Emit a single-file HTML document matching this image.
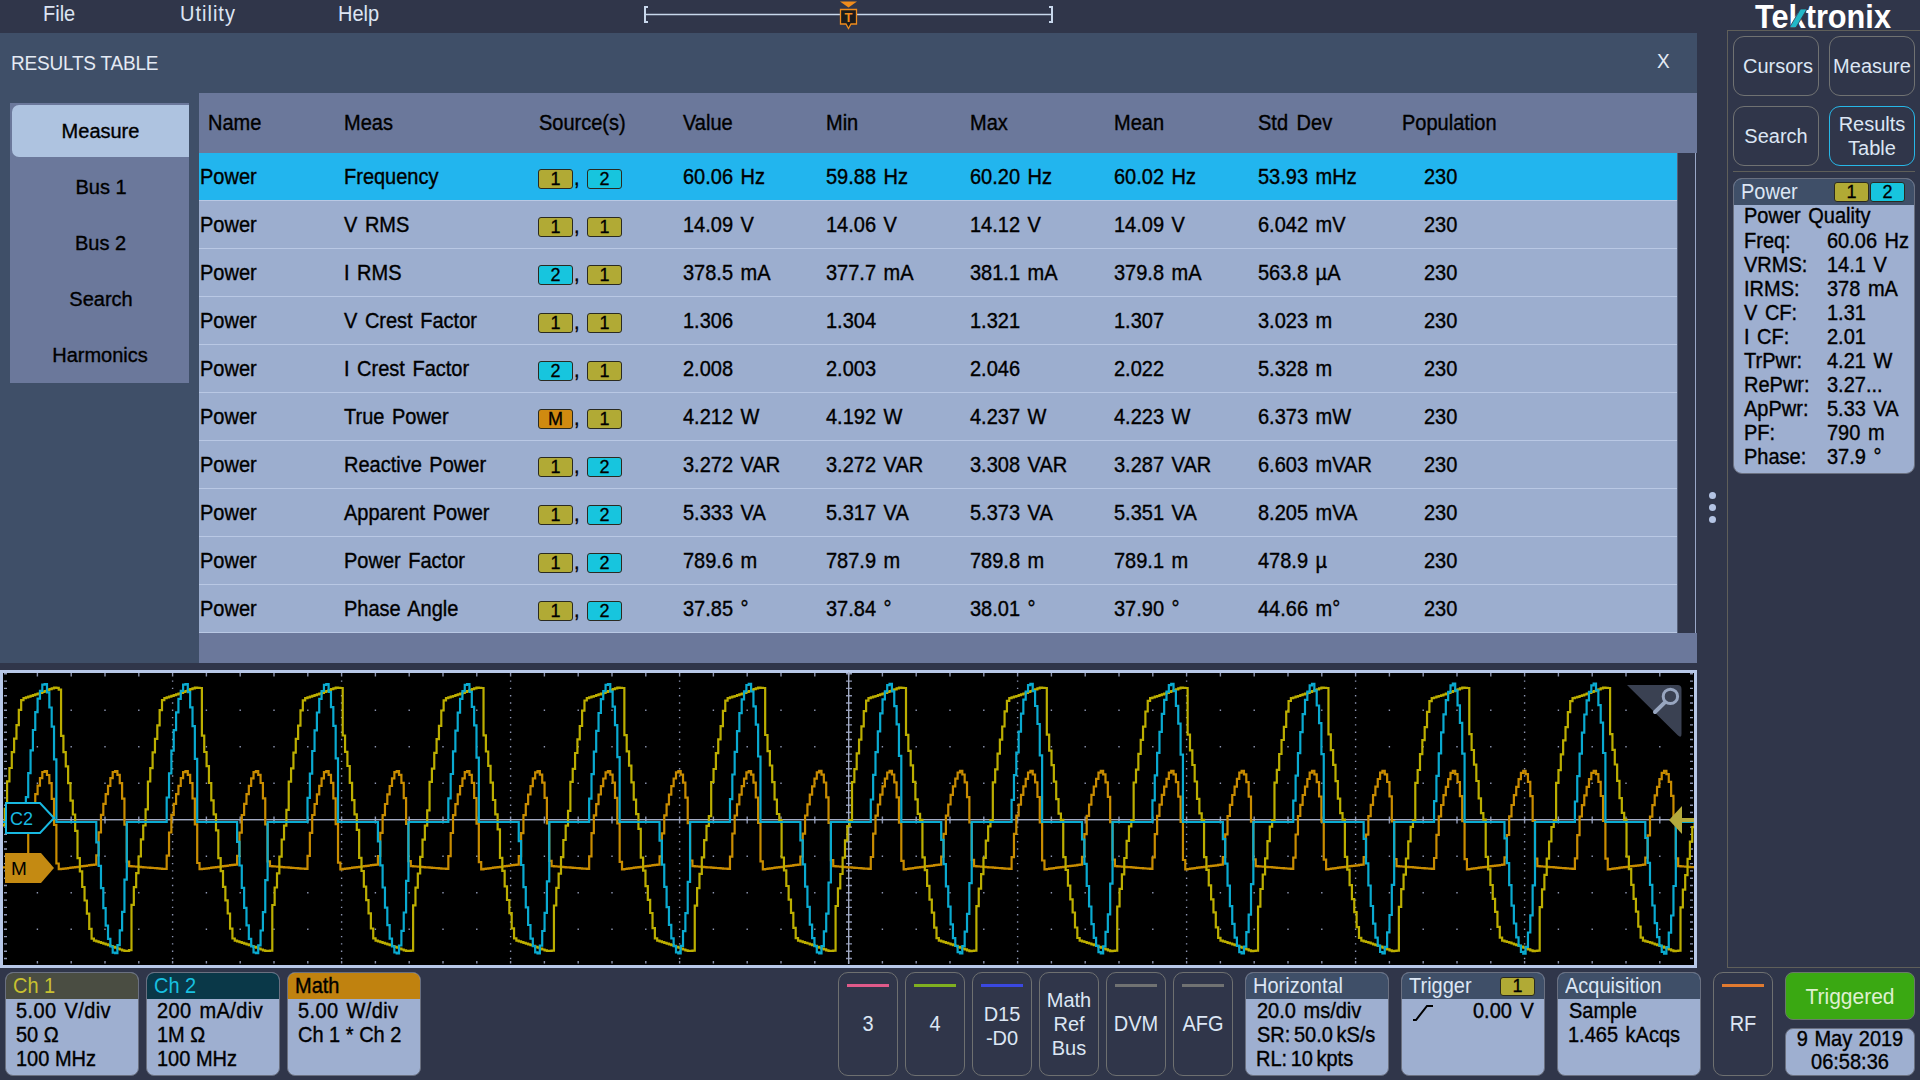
<!DOCTYPE html>
<html><head><meta charset="utf-8">
<style>
*{margin:0;padding:0;box-sizing:border-box}
html,body{width:1920px;height:1080px;overflow:hidden;background:#30364a;font-family:"Liberation Sans",sans-serif;color:#000}
.a{position:absolute}
.t{position:absolute;white-space:pre;line-height:1}
.k{-webkit-text-stroke:0.35px #000}
</style></head>
<body>
<div class="t" style="left:43.0px;top:4.4px;font-size:20px;color:#dce4f2;transform:scaleY(1.08);transform-origin:0 100%">File</div>
<div class="t" style="left:180.0px;top:4.4px;font-size:20px;color:#dce4f2;letter-spacing:1px;transform:scaleY(1.08);transform-origin:0 100%">Utility</div>
<div class="t" style="left:338.0px;top:4.4px;font-size:20px;color:#dce4f2;transform:scaleY(1.08);transform-origin:0 100%">Help</div>
<svg class="a" style="left:0;top:0" width="1100" height="32">
<line x1="645" y1="14.5" x2="1052" y2="14.5" stroke="#c8d8ec" stroke-width="1.5"/>
<path d="M648 7 H645 V22 H648" fill="none" stroke="#c8d8ec" stroke-width="2"/>
<path d="M1049 7 H1052 V22 H1049" fill="none" stroke="#c8d8ec" stroke-width="2"/>
<path d="M840 1.5 H857 L848.5 7.5 Z" fill="#f08c1c"/>
<path d="M840.5 9.5 H856.5 V24 H851 L848.5 28.5 L846 24 H840.5 Z" fill="#1c1c1c" stroke="#f08c1c" stroke-width="1.3"/>
<text x="848.5" y="22" font-family="Liberation Sans" font-weight="bold" font-size="13" fill="#f08c1c" text-anchor="middle">T</text>
</svg>
<div class="a" style="left:0px;top:33px;width:1697px;height:630px;background:#3f4f68;"></div>
<div class="t" style="left:11.0px;top:54.1px;font-size:19px;color:#e4eaf4;letter-spacing:-0.2px;transform:scaleY(1.08);transform-origin:0 100%">RESULTS TABLE</div>
<div class="t" style="left:1657.0px;top:52.4px;font-size:19px;color:#e4eaf4;;transform:scaleY(1.06);transform-origin:0 84.65%">X</div>
<div class="a" style="left:10px;top:103px;width:179px;height:280px;background:#6b789b;"></div>
<div class="a" style="left:12px;top:105px;width:177px;height:52px;background:#aec3e0;border-radius:7px 0 0 7px"></div>
<div class="t k" style="left:0.5px;width:200px;text-align:center;top:120.6px;font-size:20px;word-spacing:0px">Measure</div>
<div class="t k" style="left:1px;width:200px;text-align:center;top:176.6px;font-size:20px;word-spacing:0px">Bus 1</div>
<div class="t k" style="left:0.5px;width:200px;text-align:center;top:232.6px;font-size:20px;word-spacing:0px">Bus 2</div>
<div class="t k" style="left:1px;width:200px;text-align:center;top:288.6px;font-size:20px;word-spacing:0px">Search</div>
<div class="t k" style="left:0px;width:200px;text-align:center;top:344.6px;font-size:20px;word-spacing:0px">Harmonics</div>
<div class="a" style="left:199px;top:93px;width:1498px;height:60px;background:#6b789b;"></div>
<div class="a" style="left:199px;top:153px;width:1478px;height:480px;background:#9caecf;"></div>
<div class="a" style="left:199px;top:153px;width:1478px;height:47px;background:#22b5ee;"></div>
<div class="a" style="left:199px;top:200px;width:1478px;height:1px;background:#b9c8e4;"></div>
<div class="a" style="left:199px;top:248px;width:1478px;height:1px;background:#b9c8e4;"></div>
<div class="a" style="left:199px;top:296px;width:1478px;height:1px;background:#b9c8e4;"></div>
<div class="a" style="left:199px;top:344px;width:1478px;height:1px;background:#b9c8e4;"></div>
<div class="a" style="left:199px;top:392px;width:1478px;height:1px;background:#b9c8e4;"></div>
<div class="a" style="left:199px;top:440px;width:1478px;height:1px;background:#b9c8e4;"></div>
<div class="a" style="left:199px;top:488px;width:1478px;height:1px;background:#b9c8e4;"></div>
<div class="a" style="left:199px;top:536px;width:1478px;height:1px;background:#b9c8e4;"></div>
<div class="a" style="left:199px;top:584px;width:1478px;height:1px;background:#b9c8e4;"></div>
<div class="a" style="left:1677px;top:153px;width:20px;height:480px;background:#30364a;"></div>
<div class="a" style="left:1695px;top:153px;width:1px;height:480px;background:#9aa8c8;"></div>
<div class="a" style="left:1677px;top:153px;width:1px;height:480px;background:#566078;"></div>
<div class="a" style="left:199px;top:633px;width:1498px;height:30px;background:#6b789b;"></div>
<div class="a" style="left:199px;top:632px;width:1478px;height:1px;background:#b9c8e4;"></div>
<div class="t k" style="left:208.0px;top:113.1px;font-size:20px;color:#000;word-spacing:3px;transform:scaleY(1.06);transform-origin:0 84.65%">Name</div>
<div class="t k" style="left:344.0px;top:113.1px;font-size:20px;color:#000;word-spacing:3px;transform:scaleY(1.06);transform-origin:0 84.65%">Meas</div>
<div class="t k" style="left:539.0px;top:113.1px;font-size:20px;color:#000;word-spacing:3px;transform:scaleY(1.06);transform-origin:0 84.65%">Source(s)</div>
<div class="t k" style="left:683.0px;top:113.1px;font-size:20px;color:#000;word-spacing:3px;transform:scaleY(1.06);transform-origin:0 84.65%">Value</div>
<div class="t k" style="left:826.0px;top:113.1px;font-size:20px;color:#000;word-spacing:3px;transform:scaleY(1.06);transform-origin:0 84.65%">Min</div>
<div class="t k" style="left:970.0px;top:113.1px;font-size:20px;color:#000;word-spacing:3px;transform:scaleY(1.06);transform-origin:0 84.65%">Max</div>
<div class="t k" style="left:1114.0px;top:113.1px;font-size:20px;color:#000;word-spacing:3px;transform:scaleY(1.06);transform-origin:0 84.65%">Mean</div>
<div class="t k" style="left:1258.0px;top:113.1px;font-size:20px;color:#000;word-spacing:3px;transform:scaleY(1.06);transform-origin:0 84.65%">Std Dev</div>
<div class="t k" style="left:1402.0px;top:113.1px;font-size:20px;color:#000;word-spacing:3px;transform:scaleY(1.06);transform-origin:0 84.65%">Population</div>
<div class="t k" style="left:200.0px;top:166.6px;font-size:20px;color:#000;;transform:scaleY(1.06);transform-origin:0 84.65%">Power</div>
<div class="t k" style="left:344.0px;top:166.6px;font-size:20px;color:#000;word-spacing:2px;transform:scaleY(1.06);transform-origin:0 84.65%">Frequency</div>
<div class="a" style="left:538px;top:169px;width:35px;height:20px;background:#b1aa35;border:1px solid #2a2a20;border-radius:3px;font-size:18px;line-height:18px;text-align:center;color:#000;-webkit-text-stroke:0.3px #000">1</div>
<div class="t k" style="left:574.0px;top:167.6px;font-size:20px;color:#000;;transform:scaleY(1.06);transform-origin:0 84.65%">,</div>
<div class="a" style="left:587px;top:169px;width:35px;height:20px;background:#17c5de;border:1px solid #2a2a20;border-radius:3px;font-size:18px;line-height:18px;text-align:center;color:#000;-webkit-text-stroke:0.3px #000">2</div>
<div class="t k" style="left:683.0px;top:166.6px;font-size:20px;color:#000;word-spacing:2px;transform:scaleY(1.06);transform-origin:0 84.65%">60.06 Hz</div>
<div class="t k" style="left:826.0px;top:166.6px;font-size:20px;color:#000;word-spacing:2px;transform:scaleY(1.06);transform-origin:0 84.65%">59.88 Hz</div>
<div class="t k" style="left:970.0px;top:166.6px;font-size:20px;color:#000;word-spacing:2px;transform:scaleY(1.06);transform-origin:0 84.65%">60.20 Hz</div>
<div class="t k" style="left:1114.0px;top:166.6px;font-size:20px;color:#000;word-spacing:2px;transform:scaleY(1.06);transform-origin:0 84.65%">60.02 Hz</div>
<div class="t k" style="left:1258.0px;top:166.6px;font-size:20px;color:#000;word-spacing:2px;transform:scaleY(1.06);transform-origin:0 84.65%">53.93 mHz</div>
<div class="t k" style="left:1424.0px;top:166.6px;font-size:20px;color:#000;;transform:scaleY(1.06);transform-origin:0 84.65%">230</div>
<div class="t k" style="left:200.0px;top:214.6px;font-size:20px;color:#000;;transform:scaleY(1.06);transform-origin:0 84.65%">Power</div>
<div class="t k" style="left:344.0px;top:214.6px;font-size:20px;color:#000;word-spacing:2px;transform:scaleY(1.06);transform-origin:0 84.65%">V RMS</div>
<div class="a" style="left:538px;top:217px;width:35px;height:20px;background:#b1aa35;border:1px solid #2a2a20;border-radius:3px;font-size:18px;line-height:18px;text-align:center;color:#000;-webkit-text-stroke:0.3px #000">1</div>
<div class="t k" style="left:574.0px;top:215.6px;font-size:20px;color:#000;;transform:scaleY(1.06);transform-origin:0 84.65%">,</div>
<div class="a" style="left:587px;top:217px;width:35px;height:20px;background:#b1aa35;border:1px solid #2a2a20;border-radius:3px;font-size:18px;line-height:18px;text-align:center;color:#000;-webkit-text-stroke:0.3px #000">1</div>
<div class="t k" style="left:683.0px;top:214.6px;font-size:20px;color:#000;word-spacing:2px;transform:scaleY(1.06);transform-origin:0 84.65%">14.09 V</div>
<div class="t k" style="left:826.0px;top:214.6px;font-size:20px;color:#000;word-spacing:2px;transform:scaleY(1.06);transform-origin:0 84.65%">14.06 V</div>
<div class="t k" style="left:970.0px;top:214.6px;font-size:20px;color:#000;word-spacing:2px;transform:scaleY(1.06);transform-origin:0 84.65%">14.12 V</div>
<div class="t k" style="left:1114.0px;top:214.6px;font-size:20px;color:#000;word-spacing:2px;transform:scaleY(1.06);transform-origin:0 84.65%">14.09 V</div>
<div class="t k" style="left:1258.0px;top:214.6px;font-size:20px;color:#000;word-spacing:2px;transform:scaleY(1.06);transform-origin:0 84.65%">6.042 mV</div>
<div class="t k" style="left:1424.0px;top:214.6px;font-size:20px;color:#000;;transform:scaleY(1.06);transform-origin:0 84.65%">230</div>
<div class="t k" style="left:200.0px;top:262.6px;font-size:20px;color:#000;;transform:scaleY(1.06);transform-origin:0 84.65%">Power</div>
<div class="t k" style="left:344.0px;top:262.6px;font-size:20px;color:#000;word-spacing:2px;transform:scaleY(1.06);transform-origin:0 84.65%">I RMS</div>
<div class="a" style="left:538px;top:265px;width:35px;height:20px;background:#17c5de;border:1px solid #2a2a20;border-radius:3px;font-size:18px;line-height:18px;text-align:center;color:#000;-webkit-text-stroke:0.3px #000">2</div>
<div class="t k" style="left:574.0px;top:263.6px;font-size:20px;color:#000;;transform:scaleY(1.06);transform-origin:0 84.65%">,</div>
<div class="a" style="left:587px;top:265px;width:35px;height:20px;background:#b1aa35;border:1px solid #2a2a20;border-radius:3px;font-size:18px;line-height:18px;text-align:center;color:#000;-webkit-text-stroke:0.3px #000">1</div>
<div class="t k" style="left:683.0px;top:262.6px;font-size:20px;color:#000;word-spacing:2px;transform:scaleY(1.06);transform-origin:0 84.65%">378.5 mA</div>
<div class="t k" style="left:826.0px;top:262.6px;font-size:20px;color:#000;word-spacing:2px;transform:scaleY(1.06);transform-origin:0 84.65%">377.7 mA</div>
<div class="t k" style="left:970.0px;top:262.6px;font-size:20px;color:#000;word-spacing:2px;transform:scaleY(1.06);transform-origin:0 84.65%">381.1 mA</div>
<div class="t k" style="left:1114.0px;top:262.6px;font-size:20px;color:#000;word-spacing:2px;transform:scaleY(1.06);transform-origin:0 84.65%">379.8 mA</div>
<div class="t k" style="left:1258.0px;top:262.6px;font-size:20px;color:#000;word-spacing:2px;transform:scaleY(1.06);transform-origin:0 84.65%">563.8 µA</div>
<div class="t k" style="left:1424.0px;top:262.6px;font-size:20px;color:#000;;transform:scaleY(1.06);transform-origin:0 84.65%">230</div>
<div class="t k" style="left:200.0px;top:310.6px;font-size:20px;color:#000;;transform:scaleY(1.06);transform-origin:0 84.65%">Power</div>
<div class="t k" style="left:344.0px;top:310.6px;font-size:20px;color:#000;word-spacing:2px;transform:scaleY(1.06);transform-origin:0 84.65%">V Crest Factor</div>
<div class="a" style="left:538px;top:313px;width:35px;height:20px;background:#b1aa35;border:1px solid #2a2a20;border-radius:3px;font-size:18px;line-height:18px;text-align:center;color:#000;-webkit-text-stroke:0.3px #000">1</div>
<div class="t k" style="left:574.0px;top:311.6px;font-size:20px;color:#000;;transform:scaleY(1.06);transform-origin:0 84.65%">,</div>
<div class="a" style="left:587px;top:313px;width:35px;height:20px;background:#b1aa35;border:1px solid #2a2a20;border-radius:3px;font-size:18px;line-height:18px;text-align:center;color:#000;-webkit-text-stroke:0.3px #000">1</div>
<div class="t k" style="left:683.0px;top:310.6px;font-size:20px;color:#000;word-spacing:2px;transform:scaleY(1.06);transform-origin:0 84.65%">1.306</div>
<div class="t k" style="left:826.0px;top:310.6px;font-size:20px;color:#000;word-spacing:2px;transform:scaleY(1.06);transform-origin:0 84.65%">1.304</div>
<div class="t k" style="left:970.0px;top:310.6px;font-size:20px;color:#000;word-spacing:2px;transform:scaleY(1.06);transform-origin:0 84.65%">1.321</div>
<div class="t k" style="left:1114.0px;top:310.6px;font-size:20px;color:#000;word-spacing:2px;transform:scaleY(1.06);transform-origin:0 84.65%">1.307</div>
<div class="t k" style="left:1258.0px;top:310.6px;font-size:20px;color:#000;word-spacing:2px;transform:scaleY(1.06);transform-origin:0 84.65%">3.023 m</div>
<div class="t k" style="left:1424.0px;top:310.6px;font-size:20px;color:#000;;transform:scaleY(1.06);transform-origin:0 84.65%">230</div>
<div class="t k" style="left:200.0px;top:358.6px;font-size:20px;color:#000;;transform:scaleY(1.06);transform-origin:0 84.65%">Power</div>
<div class="t k" style="left:344.0px;top:358.6px;font-size:20px;color:#000;word-spacing:2px;transform:scaleY(1.06);transform-origin:0 84.65%">I Crest Factor</div>
<div class="a" style="left:538px;top:361px;width:35px;height:20px;background:#17c5de;border:1px solid #2a2a20;border-radius:3px;font-size:18px;line-height:18px;text-align:center;color:#000;-webkit-text-stroke:0.3px #000">2</div>
<div class="t k" style="left:574.0px;top:359.6px;font-size:20px;color:#000;;transform:scaleY(1.06);transform-origin:0 84.65%">,</div>
<div class="a" style="left:587px;top:361px;width:35px;height:20px;background:#b1aa35;border:1px solid #2a2a20;border-radius:3px;font-size:18px;line-height:18px;text-align:center;color:#000;-webkit-text-stroke:0.3px #000">1</div>
<div class="t k" style="left:683.0px;top:358.6px;font-size:20px;color:#000;word-spacing:2px;transform:scaleY(1.06);transform-origin:0 84.65%">2.008</div>
<div class="t k" style="left:826.0px;top:358.6px;font-size:20px;color:#000;word-spacing:2px;transform:scaleY(1.06);transform-origin:0 84.65%">2.003</div>
<div class="t k" style="left:970.0px;top:358.6px;font-size:20px;color:#000;word-spacing:2px;transform:scaleY(1.06);transform-origin:0 84.65%">2.046</div>
<div class="t k" style="left:1114.0px;top:358.6px;font-size:20px;color:#000;word-spacing:2px;transform:scaleY(1.06);transform-origin:0 84.65%">2.022</div>
<div class="t k" style="left:1258.0px;top:358.6px;font-size:20px;color:#000;word-spacing:2px;transform:scaleY(1.06);transform-origin:0 84.65%">5.328 m</div>
<div class="t k" style="left:1424.0px;top:358.6px;font-size:20px;color:#000;;transform:scaleY(1.06);transform-origin:0 84.65%">230</div>
<div class="t k" style="left:200.0px;top:406.6px;font-size:20px;color:#000;;transform:scaleY(1.06);transform-origin:0 84.65%">Power</div>
<div class="t k" style="left:344.0px;top:406.6px;font-size:20px;color:#000;word-spacing:2px;transform:scaleY(1.06);transform-origin:0 84.65%">True Power</div>
<div class="a" style="left:538px;top:409px;width:35px;height:20px;background:#d08a10;border:1px solid #2a2a20;border-radius:3px;font-size:18px;line-height:18px;text-align:center;color:#000;-webkit-text-stroke:0.3px #000">M</div>
<div class="t k" style="left:574.0px;top:407.6px;font-size:20px;color:#000;;transform:scaleY(1.06);transform-origin:0 84.65%">,</div>
<div class="a" style="left:587px;top:409px;width:35px;height:20px;background:#b1aa35;border:1px solid #2a2a20;border-radius:3px;font-size:18px;line-height:18px;text-align:center;color:#000;-webkit-text-stroke:0.3px #000">1</div>
<div class="t k" style="left:683.0px;top:406.6px;font-size:20px;color:#000;word-spacing:2px;transform:scaleY(1.06);transform-origin:0 84.65%">4.212 W</div>
<div class="t k" style="left:826.0px;top:406.6px;font-size:20px;color:#000;word-spacing:2px;transform:scaleY(1.06);transform-origin:0 84.65%">4.192 W</div>
<div class="t k" style="left:970.0px;top:406.6px;font-size:20px;color:#000;word-spacing:2px;transform:scaleY(1.06);transform-origin:0 84.65%">4.237 W</div>
<div class="t k" style="left:1114.0px;top:406.6px;font-size:20px;color:#000;word-spacing:2px;transform:scaleY(1.06);transform-origin:0 84.65%">4.223 W</div>
<div class="t k" style="left:1258.0px;top:406.6px;font-size:20px;color:#000;word-spacing:2px;transform:scaleY(1.06);transform-origin:0 84.65%">6.373 mW</div>
<div class="t k" style="left:1424.0px;top:406.6px;font-size:20px;color:#000;;transform:scaleY(1.06);transform-origin:0 84.65%">230</div>
<div class="t k" style="left:200.0px;top:454.6px;font-size:20px;color:#000;;transform:scaleY(1.06);transform-origin:0 84.65%">Power</div>
<div class="t k" style="left:344.0px;top:454.6px;font-size:20px;color:#000;word-spacing:2px;transform:scaleY(1.06);transform-origin:0 84.65%">Reactive Power</div>
<div class="a" style="left:538px;top:457px;width:35px;height:20px;background:#b1aa35;border:1px solid #2a2a20;border-radius:3px;font-size:18px;line-height:18px;text-align:center;color:#000;-webkit-text-stroke:0.3px #000">1</div>
<div class="t k" style="left:574.0px;top:455.6px;font-size:20px;color:#000;;transform:scaleY(1.06);transform-origin:0 84.65%">,</div>
<div class="a" style="left:587px;top:457px;width:35px;height:20px;background:#17c5de;border:1px solid #2a2a20;border-radius:3px;font-size:18px;line-height:18px;text-align:center;color:#000;-webkit-text-stroke:0.3px #000">2</div>
<div class="t k" style="left:683.0px;top:454.6px;font-size:20px;color:#000;word-spacing:2px;transform:scaleY(1.06);transform-origin:0 84.65%">3.272 VAR</div>
<div class="t k" style="left:826.0px;top:454.6px;font-size:20px;color:#000;word-spacing:2px;transform:scaleY(1.06);transform-origin:0 84.65%">3.272 VAR</div>
<div class="t k" style="left:970.0px;top:454.6px;font-size:20px;color:#000;word-spacing:2px;transform:scaleY(1.06);transform-origin:0 84.65%">3.308 VAR</div>
<div class="t k" style="left:1114.0px;top:454.6px;font-size:20px;color:#000;word-spacing:2px;transform:scaleY(1.06);transform-origin:0 84.65%">3.287 VAR</div>
<div class="t k" style="left:1258.0px;top:454.6px;font-size:20px;color:#000;word-spacing:2px;transform:scaleY(1.06);transform-origin:0 84.65%">6.603 mVAR</div>
<div class="t k" style="left:1424.0px;top:454.6px;font-size:20px;color:#000;;transform:scaleY(1.06);transform-origin:0 84.65%">230</div>
<div class="t k" style="left:200.0px;top:502.6px;font-size:20px;color:#000;;transform:scaleY(1.06);transform-origin:0 84.65%">Power</div>
<div class="t k" style="left:344.0px;top:502.6px;font-size:20px;color:#000;word-spacing:2px;transform:scaleY(1.06);transform-origin:0 84.65%">Apparent Power</div>
<div class="a" style="left:538px;top:505px;width:35px;height:20px;background:#b1aa35;border:1px solid #2a2a20;border-radius:3px;font-size:18px;line-height:18px;text-align:center;color:#000;-webkit-text-stroke:0.3px #000">1</div>
<div class="t k" style="left:574.0px;top:503.6px;font-size:20px;color:#000;;transform:scaleY(1.06);transform-origin:0 84.65%">,</div>
<div class="a" style="left:587px;top:505px;width:35px;height:20px;background:#17c5de;border:1px solid #2a2a20;border-radius:3px;font-size:18px;line-height:18px;text-align:center;color:#000;-webkit-text-stroke:0.3px #000">2</div>
<div class="t k" style="left:683.0px;top:502.6px;font-size:20px;color:#000;word-spacing:2px;transform:scaleY(1.06);transform-origin:0 84.65%">5.333 VA</div>
<div class="t k" style="left:826.0px;top:502.6px;font-size:20px;color:#000;word-spacing:2px;transform:scaleY(1.06);transform-origin:0 84.65%">5.317 VA</div>
<div class="t k" style="left:970.0px;top:502.6px;font-size:20px;color:#000;word-spacing:2px;transform:scaleY(1.06);transform-origin:0 84.65%">5.373 VA</div>
<div class="t k" style="left:1114.0px;top:502.6px;font-size:20px;color:#000;word-spacing:2px;transform:scaleY(1.06);transform-origin:0 84.65%">5.351 VA</div>
<div class="t k" style="left:1258.0px;top:502.6px;font-size:20px;color:#000;word-spacing:2px;transform:scaleY(1.06);transform-origin:0 84.65%">8.205 mVA</div>
<div class="t k" style="left:1424.0px;top:502.6px;font-size:20px;color:#000;;transform:scaleY(1.06);transform-origin:0 84.65%">230</div>
<div class="t k" style="left:200.0px;top:550.6px;font-size:20px;color:#000;;transform:scaleY(1.06);transform-origin:0 84.65%">Power</div>
<div class="t k" style="left:344.0px;top:550.6px;font-size:20px;color:#000;word-spacing:2px;transform:scaleY(1.06);transform-origin:0 84.65%">Power Factor</div>
<div class="a" style="left:538px;top:553px;width:35px;height:20px;background:#b1aa35;border:1px solid #2a2a20;border-radius:3px;font-size:18px;line-height:18px;text-align:center;color:#000;-webkit-text-stroke:0.3px #000">1</div>
<div class="t k" style="left:574.0px;top:551.6px;font-size:20px;color:#000;;transform:scaleY(1.06);transform-origin:0 84.65%">,</div>
<div class="a" style="left:587px;top:553px;width:35px;height:20px;background:#17c5de;border:1px solid #2a2a20;border-radius:3px;font-size:18px;line-height:18px;text-align:center;color:#000;-webkit-text-stroke:0.3px #000">2</div>
<div class="t k" style="left:683.0px;top:550.6px;font-size:20px;color:#000;word-spacing:2px;transform:scaleY(1.06);transform-origin:0 84.65%">789.6 m</div>
<div class="t k" style="left:826.0px;top:550.6px;font-size:20px;color:#000;word-spacing:2px;transform:scaleY(1.06);transform-origin:0 84.65%">787.9 m</div>
<div class="t k" style="left:970.0px;top:550.6px;font-size:20px;color:#000;word-spacing:2px;transform:scaleY(1.06);transform-origin:0 84.65%">789.8 m</div>
<div class="t k" style="left:1114.0px;top:550.6px;font-size:20px;color:#000;word-spacing:2px;transform:scaleY(1.06);transform-origin:0 84.65%">789.1 m</div>
<div class="t k" style="left:1258.0px;top:550.6px;font-size:20px;color:#000;word-spacing:2px;transform:scaleY(1.06);transform-origin:0 84.65%">478.9 µ</div>
<div class="t k" style="left:1424.0px;top:550.6px;font-size:20px;color:#000;;transform:scaleY(1.06);transform-origin:0 84.65%">230</div>
<div class="t k" style="left:200.0px;top:598.6px;font-size:20px;color:#000;;transform:scaleY(1.06);transform-origin:0 84.65%">Power</div>
<div class="t k" style="left:344.0px;top:598.6px;font-size:20px;color:#000;word-spacing:2px;transform:scaleY(1.06);transform-origin:0 84.65%">Phase Angle</div>
<div class="a" style="left:538px;top:601px;width:35px;height:20px;background:#b1aa35;border:1px solid #2a2a20;border-radius:3px;font-size:18px;line-height:18px;text-align:center;color:#000;-webkit-text-stroke:0.3px #000">1</div>
<div class="t k" style="left:574.0px;top:599.6px;font-size:20px;color:#000;;transform:scaleY(1.06);transform-origin:0 84.65%">,</div>
<div class="a" style="left:587px;top:601px;width:35px;height:20px;background:#17c5de;border:1px solid #2a2a20;border-radius:3px;font-size:18px;line-height:18px;text-align:center;color:#000;-webkit-text-stroke:0.3px #000">2</div>
<div class="t k" style="left:683.0px;top:598.6px;font-size:20px;color:#000;word-spacing:2px;transform:scaleY(1.06);transform-origin:0 84.65%">37.85 °</div>
<div class="t k" style="left:826.0px;top:598.6px;font-size:20px;color:#000;word-spacing:2px;transform:scaleY(1.06);transform-origin:0 84.65%">37.84 °</div>
<div class="t k" style="left:970.0px;top:598.6px;font-size:20px;color:#000;word-spacing:2px;transform:scaleY(1.06);transform-origin:0 84.65%">38.01 °</div>
<div class="t k" style="left:1114.0px;top:598.6px;font-size:20px;color:#000;word-spacing:2px;transform:scaleY(1.06);transform-origin:0 84.65%">37.90 °</div>
<div class="t k" style="left:1258.0px;top:598.6px;font-size:20px;color:#000;word-spacing:2px;transform:scaleY(1.06);transform-origin:0 84.65%">44.66 m°</div>
<div class="t k" style="left:1424.0px;top:598.6px;font-size:20px;color:#000;;transform:scaleY(1.06);transform-origin:0 84.65%">230</div>
<div class="a" style="left:0px;top:670px;width:1697px;height:298px;background:#b8c8e8;"></div>
<div class="a" style="left:3px;top:673px;width:1691px;height:292px;background:#000;"></div>
<svg class="a" style="left:3px;top:672px" width="1691" height="292" viewBox="3 672 1691 292">
<path d="M36.7 673.1h1.4v1.4h-1.4z M70.5 673.1h1.4v1.4h-1.4z M104.3 673.1h1.4v1.4h-1.4z M138.1 673.1h1.4v1.4h-1.4z M171.9 673.1h1.4v1.4h-1.4z M205.7 673.1h1.4v1.4h-1.4z M239.5 673.1h1.4v1.4h-1.4z M273.3 673.1h1.4v1.4h-1.4z M307.1 673.1h1.4v1.4h-1.4z M340.9 673.1h1.4v1.4h-1.4z M374.7 673.1h1.4v1.4h-1.4z M408.5 673.1h1.4v1.4h-1.4z M442.3 673.1h1.4v1.4h-1.4z M476.1 673.1h1.4v1.4h-1.4z M509.9 673.1h1.4v1.4h-1.4z M543.7 673.1h1.4v1.4h-1.4z M577.5 673.1h1.4v1.4h-1.4z M611.3 673.1h1.4v1.4h-1.4z M645.1 673.1h1.4v1.4h-1.4z M678.9 673.1h1.4v1.4h-1.4z M712.7 673.1h1.4v1.4h-1.4z M746.5 673.1h1.4v1.4h-1.4z M780.3 673.1h1.4v1.4h-1.4z M814.1 673.1h1.4v1.4h-1.4z M847.9 673.1h1.4v1.4h-1.4z M881.7 673.1h1.4v1.4h-1.4z M915.5 673.1h1.4v1.4h-1.4z M949.3 673.1h1.4v1.4h-1.4z M983.1 673.1h1.4v1.4h-1.4z M1016.9 673.1h1.4v1.4h-1.4z M1050.7 673.1h1.4v1.4h-1.4z M1084.5 673.1h1.4v1.4h-1.4z M1118.3 673.1h1.4v1.4h-1.4z M1152.1 673.1h1.4v1.4h-1.4z M1185.9 673.1h1.4v1.4h-1.4z M1219.7 673.1h1.4v1.4h-1.4z M1253.5 673.1h1.4v1.4h-1.4z M1287.3 673.1h1.4v1.4h-1.4z M1321.1 673.1h1.4v1.4h-1.4z M1354.9 673.1h1.4v1.4h-1.4z M1388.7 673.1h1.4v1.4h-1.4z M1422.5 673.1h1.4v1.4h-1.4z M1456.3 673.1h1.4v1.4h-1.4z M1490.1 673.1h1.4v1.4h-1.4z M1523.9 673.1h1.4v1.4h-1.4z M1557.7 673.1h1.4v1.4h-1.4z M1591.5 673.1h1.4v1.4h-1.4z M1625.3 673.1h1.4v1.4h-1.4z M1659.1 673.1h1.4v1.4h-1.4z M36.7 709.6h1.4v1.4h-1.4z M70.5 709.6h1.4v1.4h-1.4z M104.3 709.6h1.4v1.4h-1.4z M138.1 709.6h1.4v1.4h-1.4z M171.9 709.6h1.4v1.4h-1.4z M205.7 709.6h1.4v1.4h-1.4z M239.5 709.6h1.4v1.4h-1.4z M273.3 709.6h1.4v1.4h-1.4z M307.1 709.6h1.4v1.4h-1.4z M340.9 709.6h1.4v1.4h-1.4z M374.7 709.6h1.4v1.4h-1.4z M408.5 709.6h1.4v1.4h-1.4z M442.3 709.6h1.4v1.4h-1.4z M476.1 709.6h1.4v1.4h-1.4z M509.9 709.6h1.4v1.4h-1.4z M543.7 709.6h1.4v1.4h-1.4z M577.5 709.6h1.4v1.4h-1.4z M611.3 709.6h1.4v1.4h-1.4z M645.1 709.6h1.4v1.4h-1.4z M678.9 709.6h1.4v1.4h-1.4z M712.7 709.6h1.4v1.4h-1.4z M746.5 709.6h1.4v1.4h-1.4z M780.3 709.6h1.4v1.4h-1.4z M814.1 709.6h1.4v1.4h-1.4z M847.9 709.6h1.4v1.4h-1.4z M881.7 709.6h1.4v1.4h-1.4z M915.5 709.6h1.4v1.4h-1.4z M949.3 709.6h1.4v1.4h-1.4z M983.1 709.6h1.4v1.4h-1.4z M1016.9 709.6h1.4v1.4h-1.4z M1050.7 709.6h1.4v1.4h-1.4z M1084.5 709.6h1.4v1.4h-1.4z M1118.3 709.6h1.4v1.4h-1.4z M1152.1 709.6h1.4v1.4h-1.4z M1185.9 709.6h1.4v1.4h-1.4z M1219.7 709.6h1.4v1.4h-1.4z M1253.5 709.6h1.4v1.4h-1.4z M1287.3 709.6h1.4v1.4h-1.4z M1321.1 709.6h1.4v1.4h-1.4z M1354.9 709.6h1.4v1.4h-1.4z M1388.7 709.6h1.4v1.4h-1.4z M1422.5 709.6h1.4v1.4h-1.4z M1456.3 709.6h1.4v1.4h-1.4z M1490.1 709.6h1.4v1.4h-1.4z M1523.9 709.6h1.4v1.4h-1.4z M1557.7 709.6h1.4v1.4h-1.4z M1591.5 709.6h1.4v1.4h-1.4z M1625.3 709.6h1.4v1.4h-1.4z M1659.1 709.6h1.4v1.4h-1.4z M36.7 746.1h1.4v1.4h-1.4z M70.5 746.1h1.4v1.4h-1.4z M104.3 746.1h1.4v1.4h-1.4z M138.1 746.1h1.4v1.4h-1.4z M171.9 746.1h1.4v1.4h-1.4z M205.7 746.1h1.4v1.4h-1.4z M239.5 746.1h1.4v1.4h-1.4z M273.3 746.1h1.4v1.4h-1.4z M307.1 746.1h1.4v1.4h-1.4z M340.9 746.1h1.4v1.4h-1.4z M374.7 746.1h1.4v1.4h-1.4z M408.5 746.1h1.4v1.4h-1.4z M442.3 746.1h1.4v1.4h-1.4z M476.1 746.1h1.4v1.4h-1.4z M509.9 746.1h1.4v1.4h-1.4z M543.7 746.1h1.4v1.4h-1.4z M577.5 746.1h1.4v1.4h-1.4z M611.3 746.1h1.4v1.4h-1.4z M645.1 746.1h1.4v1.4h-1.4z M678.9 746.1h1.4v1.4h-1.4z M712.7 746.1h1.4v1.4h-1.4z M746.5 746.1h1.4v1.4h-1.4z M780.3 746.1h1.4v1.4h-1.4z M814.1 746.1h1.4v1.4h-1.4z M847.9 746.1h1.4v1.4h-1.4z M881.7 746.1h1.4v1.4h-1.4z M915.5 746.1h1.4v1.4h-1.4z M949.3 746.1h1.4v1.4h-1.4z M983.1 746.1h1.4v1.4h-1.4z M1016.9 746.1h1.4v1.4h-1.4z M1050.7 746.1h1.4v1.4h-1.4z M1084.5 746.1h1.4v1.4h-1.4z M1118.3 746.1h1.4v1.4h-1.4z M1152.1 746.1h1.4v1.4h-1.4z M1185.9 746.1h1.4v1.4h-1.4z M1219.7 746.1h1.4v1.4h-1.4z M1253.5 746.1h1.4v1.4h-1.4z M1287.3 746.1h1.4v1.4h-1.4z M1321.1 746.1h1.4v1.4h-1.4z M1354.9 746.1h1.4v1.4h-1.4z M1388.7 746.1h1.4v1.4h-1.4z M1422.5 746.1h1.4v1.4h-1.4z M1456.3 746.1h1.4v1.4h-1.4z M1490.1 746.1h1.4v1.4h-1.4z M1523.9 746.1h1.4v1.4h-1.4z M1557.7 746.1h1.4v1.4h-1.4z M1591.5 746.1h1.4v1.4h-1.4z M1625.3 746.1h1.4v1.4h-1.4z M1659.1 746.1h1.4v1.4h-1.4z M36.7 782.6h1.4v1.4h-1.4z M70.5 782.6h1.4v1.4h-1.4z M104.3 782.6h1.4v1.4h-1.4z M138.1 782.6h1.4v1.4h-1.4z M171.9 782.6h1.4v1.4h-1.4z M205.7 782.6h1.4v1.4h-1.4z M239.5 782.6h1.4v1.4h-1.4z M273.3 782.6h1.4v1.4h-1.4z M307.1 782.6h1.4v1.4h-1.4z M340.9 782.6h1.4v1.4h-1.4z M374.7 782.6h1.4v1.4h-1.4z M408.5 782.6h1.4v1.4h-1.4z M442.3 782.6h1.4v1.4h-1.4z M476.1 782.6h1.4v1.4h-1.4z M509.9 782.6h1.4v1.4h-1.4z M543.7 782.6h1.4v1.4h-1.4z M577.5 782.6h1.4v1.4h-1.4z M611.3 782.6h1.4v1.4h-1.4z M645.1 782.6h1.4v1.4h-1.4z M678.9 782.6h1.4v1.4h-1.4z M712.7 782.6h1.4v1.4h-1.4z M746.5 782.6h1.4v1.4h-1.4z M780.3 782.6h1.4v1.4h-1.4z M814.1 782.6h1.4v1.4h-1.4z M847.9 782.6h1.4v1.4h-1.4z M881.7 782.6h1.4v1.4h-1.4z M915.5 782.6h1.4v1.4h-1.4z M949.3 782.6h1.4v1.4h-1.4z M983.1 782.6h1.4v1.4h-1.4z M1016.9 782.6h1.4v1.4h-1.4z M1050.7 782.6h1.4v1.4h-1.4z M1084.5 782.6h1.4v1.4h-1.4z M1118.3 782.6h1.4v1.4h-1.4z M1152.1 782.6h1.4v1.4h-1.4z M1185.9 782.6h1.4v1.4h-1.4z M1219.7 782.6h1.4v1.4h-1.4z M1253.5 782.6h1.4v1.4h-1.4z M1287.3 782.6h1.4v1.4h-1.4z M1321.1 782.6h1.4v1.4h-1.4z M1354.9 782.6h1.4v1.4h-1.4z M1388.7 782.6h1.4v1.4h-1.4z M1422.5 782.6h1.4v1.4h-1.4z M1456.3 782.6h1.4v1.4h-1.4z M1490.1 782.6h1.4v1.4h-1.4z M1523.9 782.6h1.4v1.4h-1.4z M1557.7 782.6h1.4v1.4h-1.4z M1591.5 782.6h1.4v1.4h-1.4z M1625.3 782.6h1.4v1.4h-1.4z M1659.1 782.6h1.4v1.4h-1.4z M36.7 819.1h1.4v1.4h-1.4z M70.5 819.1h1.4v1.4h-1.4z M104.3 819.1h1.4v1.4h-1.4z M138.1 819.1h1.4v1.4h-1.4z M171.9 819.1h1.4v1.4h-1.4z M205.7 819.1h1.4v1.4h-1.4z M239.5 819.1h1.4v1.4h-1.4z M273.3 819.1h1.4v1.4h-1.4z M307.1 819.1h1.4v1.4h-1.4z M340.9 819.1h1.4v1.4h-1.4z M374.7 819.1h1.4v1.4h-1.4z M408.5 819.1h1.4v1.4h-1.4z M442.3 819.1h1.4v1.4h-1.4z M476.1 819.1h1.4v1.4h-1.4z M509.9 819.1h1.4v1.4h-1.4z M543.7 819.1h1.4v1.4h-1.4z M577.5 819.1h1.4v1.4h-1.4z M611.3 819.1h1.4v1.4h-1.4z M645.1 819.1h1.4v1.4h-1.4z M678.9 819.1h1.4v1.4h-1.4z M712.7 819.1h1.4v1.4h-1.4z M746.5 819.1h1.4v1.4h-1.4z M780.3 819.1h1.4v1.4h-1.4z M814.1 819.1h1.4v1.4h-1.4z M847.9 819.1h1.4v1.4h-1.4z M881.7 819.1h1.4v1.4h-1.4z M915.5 819.1h1.4v1.4h-1.4z M949.3 819.1h1.4v1.4h-1.4z M983.1 819.1h1.4v1.4h-1.4z M1016.9 819.1h1.4v1.4h-1.4z M1050.7 819.1h1.4v1.4h-1.4z M1084.5 819.1h1.4v1.4h-1.4z M1118.3 819.1h1.4v1.4h-1.4z M1152.1 819.1h1.4v1.4h-1.4z M1185.9 819.1h1.4v1.4h-1.4z M1219.7 819.1h1.4v1.4h-1.4z M1253.5 819.1h1.4v1.4h-1.4z M1287.3 819.1h1.4v1.4h-1.4z M1321.1 819.1h1.4v1.4h-1.4z M1354.9 819.1h1.4v1.4h-1.4z M1388.7 819.1h1.4v1.4h-1.4z M1422.5 819.1h1.4v1.4h-1.4z M1456.3 819.1h1.4v1.4h-1.4z M1490.1 819.1h1.4v1.4h-1.4z M1523.9 819.1h1.4v1.4h-1.4z M1557.7 819.1h1.4v1.4h-1.4z M1591.5 819.1h1.4v1.4h-1.4z M1625.3 819.1h1.4v1.4h-1.4z M1659.1 819.1h1.4v1.4h-1.4z M36.7 855.6h1.4v1.4h-1.4z M70.5 855.6h1.4v1.4h-1.4z M104.3 855.6h1.4v1.4h-1.4z M138.1 855.6h1.4v1.4h-1.4z M171.9 855.6h1.4v1.4h-1.4z M205.7 855.6h1.4v1.4h-1.4z M239.5 855.6h1.4v1.4h-1.4z M273.3 855.6h1.4v1.4h-1.4z M307.1 855.6h1.4v1.4h-1.4z M340.9 855.6h1.4v1.4h-1.4z M374.7 855.6h1.4v1.4h-1.4z M408.5 855.6h1.4v1.4h-1.4z M442.3 855.6h1.4v1.4h-1.4z M476.1 855.6h1.4v1.4h-1.4z M509.9 855.6h1.4v1.4h-1.4z M543.7 855.6h1.4v1.4h-1.4z M577.5 855.6h1.4v1.4h-1.4z M611.3 855.6h1.4v1.4h-1.4z M645.1 855.6h1.4v1.4h-1.4z M678.9 855.6h1.4v1.4h-1.4z M712.7 855.6h1.4v1.4h-1.4z M746.5 855.6h1.4v1.4h-1.4z M780.3 855.6h1.4v1.4h-1.4z M814.1 855.6h1.4v1.4h-1.4z M847.9 855.6h1.4v1.4h-1.4z M881.7 855.6h1.4v1.4h-1.4z M915.5 855.6h1.4v1.4h-1.4z M949.3 855.6h1.4v1.4h-1.4z M983.1 855.6h1.4v1.4h-1.4z M1016.9 855.6h1.4v1.4h-1.4z M1050.7 855.6h1.4v1.4h-1.4z M1084.5 855.6h1.4v1.4h-1.4z M1118.3 855.6h1.4v1.4h-1.4z M1152.1 855.6h1.4v1.4h-1.4z M1185.9 855.6h1.4v1.4h-1.4z M1219.7 855.6h1.4v1.4h-1.4z M1253.5 855.6h1.4v1.4h-1.4z M1287.3 855.6h1.4v1.4h-1.4z M1321.1 855.6h1.4v1.4h-1.4z M1354.9 855.6h1.4v1.4h-1.4z M1388.7 855.6h1.4v1.4h-1.4z M1422.5 855.6h1.4v1.4h-1.4z M1456.3 855.6h1.4v1.4h-1.4z M1490.1 855.6h1.4v1.4h-1.4z M1523.9 855.6h1.4v1.4h-1.4z M1557.7 855.6h1.4v1.4h-1.4z M1591.5 855.6h1.4v1.4h-1.4z M1625.3 855.6h1.4v1.4h-1.4z M1659.1 855.6h1.4v1.4h-1.4z M36.7 892.1h1.4v1.4h-1.4z M70.5 892.1h1.4v1.4h-1.4z M104.3 892.1h1.4v1.4h-1.4z M138.1 892.1h1.4v1.4h-1.4z M171.9 892.1h1.4v1.4h-1.4z M205.7 892.1h1.4v1.4h-1.4z M239.5 892.1h1.4v1.4h-1.4z M273.3 892.1h1.4v1.4h-1.4z M307.1 892.1h1.4v1.4h-1.4z M340.9 892.1h1.4v1.4h-1.4z M374.7 892.1h1.4v1.4h-1.4z M408.5 892.1h1.4v1.4h-1.4z M442.3 892.1h1.4v1.4h-1.4z M476.1 892.1h1.4v1.4h-1.4z M509.9 892.1h1.4v1.4h-1.4z M543.7 892.1h1.4v1.4h-1.4z M577.5 892.1h1.4v1.4h-1.4z M611.3 892.1h1.4v1.4h-1.4z M645.1 892.1h1.4v1.4h-1.4z M678.9 892.1h1.4v1.4h-1.4z M712.7 892.1h1.4v1.4h-1.4z M746.5 892.1h1.4v1.4h-1.4z M780.3 892.1h1.4v1.4h-1.4z M814.1 892.1h1.4v1.4h-1.4z M847.9 892.1h1.4v1.4h-1.4z M881.7 892.1h1.4v1.4h-1.4z M915.5 892.1h1.4v1.4h-1.4z M949.3 892.1h1.4v1.4h-1.4z M983.1 892.1h1.4v1.4h-1.4z M1016.9 892.1h1.4v1.4h-1.4z M1050.7 892.1h1.4v1.4h-1.4z M1084.5 892.1h1.4v1.4h-1.4z M1118.3 892.1h1.4v1.4h-1.4z M1152.1 892.1h1.4v1.4h-1.4z M1185.9 892.1h1.4v1.4h-1.4z M1219.7 892.1h1.4v1.4h-1.4z M1253.5 892.1h1.4v1.4h-1.4z M1287.3 892.1h1.4v1.4h-1.4z M1321.1 892.1h1.4v1.4h-1.4z M1354.9 892.1h1.4v1.4h-1.4z M1388.7 892.1h1.4v1.4h-1.4z M1422.5 892.1h1.4v1.4h-1.4z M1456.3 892.1h1.4v1.4h-1.4z M1490.1 892.1h1.4v1.4h-1.4z M1523.9 892.1h1.4v1.4h-1.4z M1557.7 892.1h1.4v1.4h-1.4z M1591.5 892.1h1.4v1.4h-1.4z M1625.3 892.1h1.4v1.4h-1.4z M1659.1 892.1h1.4v1.4h-1.4z M36.7 928.6h1.4v1.4h-1.4z M70.5 928.6h1.4v1.4h-1.4z M104.3 928.6h1.4v1.4h-1.4z M138.1 928.6h1.4v1.4h-1.4z M171.9 928.6h1.4v1.4h-1.4z M205.7 928.6h1.4v1.4h-1.4z M239.5 928.6h1.4v1.4h-1.4z M273.3 928.6h1.4v1.4h-1.4z M307.1 928.6h1.4v1.4h-1.4z M340.9 928.6h1.4v1.4h-1.4z M374.7 928.6h1.4v1.4h-1.4z M408.5 928.6h1.4v1.4h-1.4z M442.3 928.6h1.4v1.4h-1.4z M476.1 928.6h1.4v1.4h-1.4z M509.9 928.6h1.4v1.4h-1.4z M543.7 928.6h1.4v1.4h-1.4z M577.5 928.6h1.4v1.4h-1.4z M611.3 928.6h1.4v1.4h-1.4z M645.1 928.6h1.4v1.4h-1.4z M678.9 928.6h1.4v1.4h-1.4z M712.7 928.6h1.4v1.4h-1.4z M746.5 928.6h1.4v1.4h-1.4z M780.3 928.6h1.4v1.4h-1.4z M814.1 928.6h1.4v1.4h-1.4z M847.9 928.6h1.4v1.4h-1.4z M881.7 928.6h1.4v1.4h-1.4z M915.5 928.6h1.4v1.4h-1.4z M949.3 928.6h1.4v1.4h-1.4z M983.1 928.6h1.4v1.4h-1.4z M1016.9 928.6h1.4v1.4h-1.4z M1050.7 928.6h1.4v1.4h-1.4z M1084.5 928.6h1.4v1.4h-1.4z M1118.3 928.6h1.4v1.4h-1.4z M1152.1 928.6h1.4v1.4h-1.4z M1185.9 928.6h1.4v1.4h-1.4z M1219.7 928.6h1.4v1.4h-1.4z M1253.5 928.6h1.4v1.4h-1.4z M1287.3 928.6h1.4v1.4h-1.4z M1321.1 928.6h1.4v1.4h-1.4z M1354.9 928.6h1.4v1.4h-1.4z M1388.7 928.6h1.4v1.4h-1.4z M1422.5 928.6h1.4v1.4h-1.4z M1456.3 928.6h1.4v1.4h-1.4z M1490.1 928.6h1.4v1.4h-1.4z M1523.9 928.6h1.4v1.4h-1.4z M1557.7 928.6h1.4v1.4h-1.4z M1591.5 928.6h1.4v1.4h-1.4z M1625.3 928.6h1.4v1.4h-1.4z M1659.1 928.6h1.4v1.4h-1.4z M36.7 674h1.4v2.4h-1.4z M36.7 961h1.4v2.4h-1.4z M70.5 674h1.4v2.4h-1.4z M70.5 961h1.4v2.4h-1.4z M104.3 674h1.4v2.4h-1.4z M104.3 961h1.4v2.4h-1.4z M138.1 674h1.4v2.4h-1.4z M138.1 961h1.4v2.4h-1.4z M171.9 674h1.4v2.4h-1.4z M171.9 961h1.4v2.4h-1.4z M205.7 674h1.4v2.4h-1.4z M205.7 961h1.4v2.4h-1.4z M239.5 674h1.4v2.4h-1.4z M239.5 961h1.4v2.4h-1.4z M273.3 674h1.4v2.4h-1.4z M273.3 961h1.4v2.4h-1.4z M307.1 674h1.4v2.4h-1.4z M307.1 961h1.4v2.4h-1.4z M340.9 674h1.4v2.4h-1.4z M340.9 961h1.4v2.4h-1.4z M374.7 674h1.4v2.4h-1.4z M374.7 961h1.4v2.4h-1.4z M408.5 674h1.4v2.4h-1.4z M408.5 961h1.4v2.4h-1.4z M442.3 674h1.4v2.4h-1.4z M442.3 961h1.4v2.4h-1.4z M476.1 674h1.4v2.4h-1.4z M476.1 961h1.4v2.4h-1.4z M509.9 674h1.4v2.4h-1.4z M509.9 961h1.4v2.4h-1.4z M543.7 674h1.4v2.4h-1.4z M543.7 961h1.4v2.4h-1.4z M577.5 674h1.4v2.4h-1.4z M577.5 961h1.4v2.4h-1.4z M611.3 674h1.4v2.4h-1.4z M611.3 961h1.4v2.4h-1.4z M645.1 674h1.4v2.4h-1.4z M645.1 961h1.4v2.4h-1.4z M678.9 674h1.4v2.4h-1.4z M678.9 961h1.4v2.4h-1.4z M712.7 674h1.4v2.4h-1.4z M712.7 961h1.4v2.4h-1.4z M746.5 674h1.4v2.4h-1.4z M746.5 961h1.4v2.4h-1.4z M780.3 674h1.4v2.4h-1.4z M780.3 961h1.4v2.4h-1.4z M814.1 674h1.4v2.4h-1.4z M814.1 961h1.4v2.4h-1.4z M847.9 674h1.4v2.4h-1.4z M847.9 961h1.4v2.4h-1.4z M881.7 674h1.4v2.4h-1.4z M881.7 961h1.4v2.4h-1.4z M915.5 674h1.4v2.4h-1.4z M915.5 961h1.4v2.4h-1.4z M949.3 674h1.4v2.4h-1.4z M949.3 961h1.4v2.4h-1.4z M983.1 674h1.4v2.4h-1.4z M983.1 961h1.4v2.4h-1.4z M1016.9 674h1.4v2.4h-1.4z M1016.9 961h1.4v2.4h-1.4z M1050.7 674h1.4v2.4h-1.4z M1050.7 961h1.4v2.4h-1.4z M1084.5 674h1.4v2.4h-1.4z M1084.5 961h1.4v2.4h-1.4z M1118.3 674h1.4v2.4h-1.4z M1118.3 961h1.4v2.4h-1.4z M1152.1 674h1.4v2.4h-1.4z M1152.1 961h1.4v2.4h-1.4z M1185.9 674h1.4v2.4h-1.4z M1185.9 961h1.4v2.4h-1.4z M1219.7 674h1.4v2.4h-1.4z M1219.7 961h1.4v2.4h-1.4z M1253.5 674h1.4v2.4h-1.4z M1253.5 961h1.4v2.4h-1.4z M1287.3 674h1.4v2.4h-1.4z M1287.3 961h1.4v2.4h-1.4z M1321.1 674h1.4v2.4h-1.4z M1321.1 961h1.4v2.4h-1.4z M1354.9 674h1.4v2.4h-1.4z M1354.9 961h1.4v2.4h-1.4z M1388.7 674h1.4v2.4h-1.4z M1388.7 961h1.4v2.4h-1.4z M1422.5 674h1.4v2.4h-1.4z M1422.5 961h1.4v2.4h-1.4z M1456.3 674h1.4v2.4h-1.4z M1456.3 961h1.4v2.4h-1.4z M1490.1 674h1.4v2.4h-1.4z M1490.1 961h1.4v2.4h-1.4z M1523.9 674h1.4v2.4h-1.4z M1523.9 961h1.4v2.4h-1.4z M1557.7 674h1.4v2.4h-1.4z M1557.7 961h1.4v2.4h-1.4z M1591.5 674h1.4v2.4h-1.4z M1591.5 961h1.4v2.4h-1.4z M1625.3 674h1.4v2.4h-1.4z M1625.3 961h1.4v2.4h-1.4z M1659.1 674h1.4v2.4h-1.4z M1659.1 961h1.4v2.4h-1.4z M171.9 673.1h1.4v1.4h-1.4z M340.9 673.1h1.4v1.4h-1.4z M509.9 673.1h1.4v1.4h-1.4z M678.9 673.1h1.4v1.4h-1.4z M1016.9 673.1h1.4v1.4h-1.4z M1185.9 673.1h1.4v1.4h-1.4z M1354.9 673.1h1.4v1.4h-1.4z M1523.9 673.1h1.4v1.4h-1.4z M4 673.1h3v1.4h-3z M1690 673.1h3v1.4h-3z M846 673.1h6v1.4h-6z M171.9 680.4h1.4v1.4h-1.4z M340.9 680.4h1.4v1.4h-1.4z M509.9 680.4h1.4v1.4h-1.4z M678.9 680.4h1.4v1.4h-1.4z M1016.9 680.4h1.4v1.4h-1.4z M1185.9 680.4h1.4v1.4h-1.4z M1354.9 680.4h1.4v1.4h-1.4z M1523.9 680.4h1.4v1.4h-1.4z M4 680.4h3v1.4h-3z M1690 680.4h3v1.4h-3z M846 680.4h6v1.4h-6z M171.9 687.7h1.4v1.4h-1.4z M340.9 687.7h1.4v1.4h-1.4z M509.9 687.7h1.4v1.4h-1.4z M678.9 687.7h1.4v1.4h-1.4z M1016.9 687.7h1.4v1.4h-1.4z M1185.9 687.7h1.4v1.4h-1.4z M1354.9 687.7h1.4v1.4h-1.4z M1523.9 687.7h1.4v1.4h-1.4z M4 687.7h3v1.4h-3z M1690 687.7h3v1.4h-3z M846 687.7h6v1.4h-6z M171.9 695.0h1.4v1.4h-1.4z M340.9 695.0h1.4v1.4h-1.4z M509.9 695.0h1.4v1.4h-1.4z M678.9 695.0h1.4v1.4h-1.4z M1016.9 695.0h1.4v1.4h-1.4z M1185.9 695.0h1.4v1.4h-1.4z M1354.9 695.0h1.4v1.4h-1.4z M1523.9 695.0h1.4v1.4h-1.4z M4 695.0h3v1.4h-3z M1690 695.0h3v1.4h-3z M846 695.0h6v1.4h-6z M171.9 702.3h1.4v1.4h-1.4z M340.9 702.3h1.4v1.4h-1.4z M509.9 702.3h1.4v1.4h-1.4z M678.9 702.3h1.4v1.4h-1.4z M1016.9 702.3h1.4v1.4h-1.4z M1185.9 702.3h1.4v1.4h-1.4z M1354.9 702.3h1.4v1.4h-1.4z M1523.9 702.3h1.4v1.4h-1.4z M4 702.3h3v1.4h-3z M1690 702.3h3v1.4h-3z M846 702.3h6v1.4h-6z M171.9 709.6h1.4v1.4h-1.4z M340.9 709.6h1.4v1.4h-1.4z M509.9 709.6h1.4v1.4h-1.4z M678.9 709.6h1.4v1.4h-1.4z M1016.9 709.6h1.4v1.4h-1.4z M1185.9 709.6h1.4v1.4h-1.4z M1354.9 709.6h1.4v1.4h-1.4z M1523.9 709.6h1.4v1.4h-1.4z M4 709.6h3v1.4h-3z M1690 709.6h3v1.4h-3z M846 709.6h6v1.4h-6z M171.9 716.9h1.4v1.4h-1.4z M340.9 716.9h1.4v1.4h-1.4z M509.9 716.9h1.4v1.4h-1.4z M678.9 716.9h1.4v1.4h-1.4z M1016.9 716.9h1.4v1.4h-1.4z M1185.9 716.9h1.4v1.4h-1.4z M1354.9 716.9h1.4v1.4h-1.4z M1523.9 716.9h1.4v1.4h-1.4z M4 716.9h3v1.4h-3z M1690 716.9h3v1.4h-3z M846 716.9h6v1.4h-6z M171.9 724.2h1.4v1.4h-1.4z M340.9 724.2h1.4v1.4h-1.4z M509.9 724.2h1.4v1.4h-1.4z M678.9 724.2h1.4v1.4h-1.4z M1016.9 724.2h1.4v1.4h-1.4z M1185.9 724.2h1.4v1.4h-1.4z M1354.9 724.2h1.4v1.4h-1.4z M1523.9 724.2h1.4v1.4h-1.4z M4 724.2h3v1.4h-3z M1690 724.2h3v1.4h-3z M846 724.2h6v1.4h-6z M171.9 731.5h1.4v1.4h-1.4z M340.9 731.5h1.4v1.4h-1.4z M509.9 731.5h1.4v1.4h-1.4z M678.9 731.5h1.4v1.4h-1.4z M1016.9 731.5h1.4v1.4h-1.4z M1185.9 731.5h1.4v1.4h-1.4z M1354.9 731.5h1.4v1.4h-1.4z M1523.9 731.5h1.4v1.4h-1.4z M4 731.5h3v1.4h-3z M1690 731.5h3v1.4h-3z M846 731.5h6v1.4h-6z M171.9 738.8h1.4v1.4h-1.4z M340.9 738.8h1.4v1.4h-1.4z M509.9 738.8h1.4v1.4h-1.4z M678.9 738.8h1.4v1.4h-1.4z M1016.9 738.8h1.4v1.4h-1.4z M1185.9 738.8h1.4v1.4h-1.4z M1354.9 738.8h1.4v1.4h-1.4z M1523.9 738.8h1.4v1.4h-1.4z M4 738.8h3v1.4h-3z M1690 738.8h3v1.4h-3z M846 738.8h6v1.4h-6z M171.9 746.1h1.4v1.4h-1.4z M340.9 746.1h1.4v1.4h-1.4z M509.9 746.1h1.4v1.4h-1.4z M678.9 746.1h1.4v1.4h-1.4z M1016.9 746.1h1.4v1.4h-1.4z M1185.9 746.1h1.4v1.4h-1.4z M1354.9 746.1h1.4v1.4h-1.4z M1523.9 746.1h1.4v1.4h-1.4z M4 746.1h3v1.4h-3z M1690 746.1h3v1.4h-3z M846 746.1h6v1.4h-6z M171.9 753.4h1.4v1.4h-1.4z M340.9 753.4h1.4v1.4h-1.4z M509.9 753.4h1.4v1.4h-1.4z M678.9 753.4h1.4v1.4h-1.4z M1016.9 753.4h1.4v1.4h-1.4z M1185.9 753.4h1.4v1.4h-1.4z M1354.9 753.4h1.4v1.4h-1.4z M1523.9 753.4h1.4v1.4h-1.4z M4 753.4h3v1.4h-3z M1690 753.4h3v1.4h-3z M846 753.4h6v1.4h-6z M171.9 760.7h1.4v1.4h-1.4z M340.9 760.7h1.4v1.4h-1.4z M509.9 760.7h1.4v1.4h-1.4z M678.9 760.7h1.4v1.4h-1.4z M1016.9 760.7h1.4v1.4h-1.4z M1185.9 760.7h1.4v1.4h-1.4z M1354.9 760.7h1.4v1.4h-1.4z M1523.9 760.7h1.4v1.4h-1.4z M4 760.7h3v1.4h-3z M1690 760.7h3v1.4h-3z M846 760.7h6v1.4h-6z M171.9 768.0h1.4v1.4h-1.4z M340.9 768.0h1.4v1.4h-1.4z M509.9 768.0h1.4v1.4h-1.4z M678.9 768.0h1.4v1.4h-1.4z M1016.9 768.0h1.4v1.4h-1.4z M1185.9 768.0h1.4v1.4h-1.4z M1354.9 768.0h1.4v1.4h-1.4z M1523.9 768.0h1.4v1.4h-1.4z M4 768.0h3v1.4h-3z M1690 768.0h3v1.4h-3z M846 768.0h6v1.4h-6z M171.9 775.3h1.4v1.4h-1.4z M340.9 775.3h1.4v1.4h-1.4z M509.9 775.3h1.4v1.4h-1.4z M678.9 775.3h1.4v1.4h-1.4z M1016.9 775.3h1.4v1.4h-1.4z M1185.9 775.3h1.4v1.4h-1.4z M1354.9 775.3h1.4v1.4h-1.4z M1523.9 775.3h1.4v1.4h-1.4z M4 775.3h3v1.4h-3z M1690 775.3h3v1.4h-3z M846 775.3h6v1.4h-6z M171.9 782.6h1.4v1.4h-1.4z M340.9 782.6h1.4v1.4h-1.4z M509.9 782.6h1.4v1.4h-1.4z M678.9 782.6h1.4v1.4h-1.4z M1016.9 782.6h1.4v1.4h-1.4z M1185.9 782.6h1.4v1.4h-1.4z M1354.9 782.6h1.4v1.4h-1.4z M1523.9 782.6h1.4v1.4h-1.4z M4 782.6h3v1.4h-3z M1690 782.6h3v1.4h-3z M846 782.6h6v1.4h-6z M171.9 789.9h1.4v1.4h-1.4z M340.9 789.9h1.4v1.4h-1.4z M509.9 789.9h1.4v1.4h-1.4z M678.9 789.9h1.4v1.4h-1.4z M1016.9 789.9h1.4v1.4h-1.4z M1185.9 789.9h1.4v1.4h-1.4z M1354.9 789.9h1.4v1.4h-1.4z M1523.9 789.9h1.4v1.4h-1.4z M4 789.9h3v1.4h-3z M1690 789.9h3v1.4h-3z M846 789.9h6v1.4h-6z M171.9 797.2h1.4v1.4h-1.4z M340.9 797.2h1.4v1.4h-1.4z M509.9 797.2h1.4v1.4h-1.4z M678.9 797.2h1.4v1.4h-1.4z M1016.9 797.2h1.4v1.4h-1.4z M1185.9 797.2h1.4v1.4h-1.4z M1354.9 797.2h1.4v1.4h-1.4z M1523.9 797.2h1.4v1.4h-1.4z M4 797.2h3v1.4h-3z M1690 797.2h3v1.4h-3z M846 797.2h6v1.4h-6z M171.9 804.5h1.4v1.4h-1.4z M340.9 804.5h1.4v1.4h-1.4z M509.9 804.5h1.4v1.4h-1.4z M678.9 804.5h1.4v1.4h-1.4z M1016.9 804.5h1.4v1.4h-1.4z M1185.9 804.5h1.4v1.4h-1.4z M1354.9 804.5h1.4v1.4h-1.4z M1523.9 804.5h1.4v1.4h-1.4z M4 804.5h3v1.4h-3z M1690 804.5h3v1.4h-3z M846 804.5h6v1.4h-6z M171.9 811.8h1.4v1.4h-1.4z M340.9 811.8h1.4v1.4h-1.4z M509.9 811.8h1.4v1.4h-1.4z M678.9 811.8h1.4v1.4h-1.4z M1016.9 811.8h1.4v1.4h-1.4z M1185.9 811.8h1.4v1.4h-1.4z M1354.9 811.8h1.4v1.4h-1.4z M1523.9 811.8h1.4v1.4h-1.4z M4 811.8h3v1.4h-3z M1690 811.8h3v1.4h-3z M846 811.8h6v1.4h-6z M171.9 819.1h1.4v1.4h-1.4z M340.9 819.1h1.4v1.4h-1.4z M509.9 819.1h1.4v1.4h-1.4z M678.9 819.1h1.4v1.4h-1.4z M1016.9 819.1h1.4v1.4h-1.4z M1185.9 819.1h1.4v1.4h-1.4z M1354.9 819.1h1.4v1.4h-1.4z M1523.9 819.1h1.4v1.4h-1.4z M4 819.1h3v1.4h-3z M1690 819.1h3v1.4h-3z M846 819.1h6v1.4h-6z M171.9 826.4h1.4v1.4h-1.4z M340.9 826.4h1.4v1.4h-1.4z M509.9 826.4h1.4v1.4h-1.4z M678.9 826.4h1.4v1.4h-1.4z M1016.9 826.4h1.4v1.4h-1.4z M1185.9 826.4h1.4v1.4h-1.4z M1354.9 826.4h1.4v1.4h-1.4z M1523.9 826.4h1.4v1.4h-1.4z M4 826.4h3v1.4h-3z M1690 826.4h3v1.4h-3z M846 826.4h6v1.4h-6z M171.9 833.7h1.4v1.4h-1.4z M340.9 833.7h1.4v1.4h-1.4z M509.9 833.7h1.4v1.4h-1.4z M678.9 833.7h1.4v1.4h-1.4z M1016.9 833.7h1.4v1.4h-1.4z M1185.9 833.7h1.4v1.4h-1.4z M1354.9 833.7h1.4v1.4h-1.4z M1523.9 833.7h1.4v1.4h-1.4z M4 833.7h3v1.4h-3z M1690 833.7h3v1.4h-3z M846 833.7h6v1.4h-6z M171.9 841.0h1.4v1.4h-1.4z M340.9 841.0h1.4v1.4h-1.4z M509.9 841.0h1.4v1.4h-1.4z M678.9 841.0h1.4v1.4h-1.4z M1016.9 841.0h1.4v1.4h-1.4z M1185.9 841.0h1.4v1.4h-1.4z M1354.9 841.0h1.4v1.4h-1.4z M1523.9 841.0h1.4v1.4h-1.4z M4 841.0h3v1.4h-3z M1690 841.0h3v1.4h-3z M846 841.0h6v1.4h-6z M171.9 848.3h1.4v1.4h-1.4z M340.9 848.3h1.4v1.4h-1.4z M509.9 848.3h1.4v1.4h-1.4z M678.9 848.3h1.4v1.4h-1.4z M1016.9 848.3h1.4v1.4h-1.4z M1185.9 848.3h1.4v1.4h-1.4z M1354.9 848.3h1.4v1.4h-1.4z M1523.9 848.3h1.4v1.4h-1.4z M4 848.3h3v1.4h-3z M1690 848.3h3v1.4h-3z M846 848.3h6v1.4h-6z M171.9 855.6h1.4v1.4h-1.4z M340.9 855.6h1.4v1.4h-1.4z M509.9 855.6h1.4v1.4h-1.4z M678.9 855.6h1.4v1.4h-1.4z M1016.9 855.6h1.4v1.4h-1.4z M1185.9 855.6h1.4v1.4h-1.4z M1354.9 855.6h1.4v1.4h-1.4z M1523.9 855.6h1.4v1.4h-1.4z M4 855.6h3v1.4h-3z M1690 855.6h3v1.4h-3z M846 855.6h6v1.4h-6z M171.9 862.9h1.4v1.4h-1.4z M340.9 862.9h1.4v1.4h-1.4z M509.9 862.9h1.4v1.4h-1.4z M678.9 862.9h1.4v1.4h-1.4z M1016.9 862.9h1.4v1.4h-1.4z M1185.9 862.9h1.4v1.4h-1.4z M1354.9 862.9h1.4v1.4h-1.4z M1523.9 862.9h1.4v1.4h-1.4z M4 862.9h3v1.4h-3z M1690 862.9h3v1.4h-3z M846 862.9h6v1.4h-6z M171.9 870.2h1.4v1.4h-1.4z M340.9 870.2h1.4v1.4h-1.4z M509.9 870.2h1.4v1.4h-1.4z M678.9 870.2h1.4v1.4h-1.4z M1016.9 870.2h1.4v1.4h-1.4z M1185.9 870.2h1.4v1.4h-1.4z M1354.9 870.2h1.4v1.4h-1.4z M1523.9 870.2h1.4v1.4h-1.4z M4 870.2h3v1.4h-3z M1690 870.2h3v1.4h-3z M846 870.2h6v1.4h-6z M171.9 877.5h1.4v1.4h-1.4z M340.9 877.5h1.4v1.4h-1.4z M509.9 877.5h1.4v1.4h-1.4z M678.9 877.5h1.4v1.4h-1.4z M1016.9 877.5h1.4v1.4h-1.4z M1185.9 877.5h1.4v1.4h-1.4z M1354.9 877.5h1.4v1.4h-1.4z M1523.9 877.5h1.4v1.4h-1.4z M4 877.5h3v1.4h-3z M1690 877.5h3v1.4h-3z M846 877.5h6v1.4h-6z M171.9 884.8h1.4v1.4h-1.4z M340.9 884.8h1.4v1.4h-1.4z M509.9 884.8h1.4v1.4h-1.4z M678.9 884.8h1.4v1.4h-1.4z M1016.9 884.8h1.4v1.4h-1.4z M1185.9 884.8h1.4v1.4h-1.4z M1354.9 884.8h1.4v1.4h-1.4z M1523.9 884.8h1.4v1.4h-1.4z M4 884.8h3v1.4h-3z M1690 884.8h3v1.4h-3z M846 884.8h6v1.4h-6z M171.9 892.1h1.4v1.4h-1.4z M340.9 892.1h1.4v1.4h-1.4z M509.9 892.1h1.4v1.4h-1.4z M678.9 892.1h1.4v1.4h-1.4z M1016.9 892.1h1.4v1.4h-1.4z M1185.9 892.1h1.4v1.4h-1.4z M1354.9 892.1h1.4v1.4h-1.4z M1523.9 892.1h1.4v1.4h-1.4z M4 892.1h3v1.4h-3z M1690 892.1h3v1.4h-3z M846 892.1h6v1.4h-6z M171.9 899.4h1.4v1.4h-1.4z M340.9 899.4h1.4v1.4h-1.4z M509.9 899.4h1.4v1.4h-1.4z M678.9 899.4h1.4v1.4h-1.4z M1016.9 899.4h1.4v1.4h-1.4z M1185.9 899.4h1.4v1.4h-1.4z M1354.9 899.4h1.4v1.4h-1.4z M1523.9 899.4h1.4v1.4h-1.4z M4 899.4h3v1.4h-3z M1690 899.4h3v1.4h-3z M846 899.4h6v1.4h-6z M171.9 906.7h1.4v1.4h-1.4z M340.9 906.7h1.4v1.4h-1.4z M509.9 906.7h1.4v1.4h-1.4z M678.9 906.7h1.4v1.4h-1.4z M1016.9 906.7h1.4v1.4h-1.4z M1185.9 906.7h1.4v1.4h-1.4z M1354.9 906.7h1.4v1.4h-1.4z M1523.9 906.7h1.4v1.4h-1.4z M4 906.7h3v1.4h-3z M1690 906.7h3v1.4h-3z M846 906.7h6v1.4h-6z M171.9 914.0h1.4v1.4h-1.4z M340.9 914.0h1.4v1.4h-1.4z M509.9 914.0h1.4v1.4h-1.4z M678.9 914.0h1.4v1.4h-1.4z M1016.9 914.0h1.4v1.4h-1.4z M1185.9 914.0h1.4v1.4h-1.4z M1354.9 914.0h1.4v1.4h-1.4z M1523.9 914.0h1.4v1.4h-1.4z M4 914.0h3v1.4h-3z M1690 914.0h3v1.4h-3z M846 914.0h6v1.4h-6z M171.9 921.3h1.4v1.4h-1.4z M340.9 921.3h1.4v1.4h-1.4z M509.9 921.3h1.4v1.4h-1.4z M678.9 921.3h1.4v1.4h-1.4z M1016.9 921.3h1.4v1.4h-1.4z M1185.9 921.3h1.4v1.4h-1.4z M1354.9 921.3h1.4v1.4h-1.4z M1523.9 921.3h1.4v1.4h-1.4z M4 921.3h3v1.4h-3z M1690 921.3h3v1.4h-3z M846 921.3h6v1.4h-6z M171.9 928.6h1.4v1.4h-1.4z M340.9 928.6h1.4v1.4h-1.4z M509.9 928.6h1.4v1.4h-1.4z M678.9 928.6h1.4v1.4h-1.4z M1016.9 928.6h1.4v1.4h-1.4z M1185.9 928.6h1.4v1.4h-1.4z M1354.9 928.6h1.4v1.4h-1.4z M1523.9 928.6h1.4v1.4h-1.4z M4 928.6h3v1.4h-3z M1690 928.6h3v1.4h-3z M846 928.6h6v1.4h-6z M171.9 935.9h1.4v1.4h-1.4z M340.9 935.9h1.4v1.4h-1.4z M509.9 935.9h1.4v1.4h-1.4z M678.9 935.9h1.4v1.4h-1.4z M1016.9 935.9h1.4v1.4h-1.4z M1185.9 935.9h1.4v1.4h-1.4z M1354.9 935.9h1.4v1.4h-1.4z M1523.9 935.9h1.4v1.4h-1.4z M4 935.9h3v1.4h-3z M1690 935.9h3v1.4h-3z M846 935.9h6v1.4h-6z M171.9 943.2h1.4v1.4h-1.4z M340.9 943.2h1.4v1.4h-1.4z M509.9 943.2h1.4v1.4h-1.4z M678.9 943.2h1.4v1.4h-1.4z M1016.9 943.2h1.4v1.4h-1.4z M1185.9 943.2h1.4v1.4h-1.4z M1354.9 943.2h1.4v1.4h-1.4z M1523.9 943.2h1.4v1.4h-1.4z M4 943.2h3v1.4h-3z M1690 943.2h3v1.4h-3z M846 943.2h6v1.4h-6z M171.9 950.5h1.4v1.4h-1.4z M340.9 950.5h1.4v1.4h-1.4z M509.9 950.5h1.4v1.4h-1.4z M678.9 950.5h1.4v1.4h-1.4z M1016.9 950.5h1.4v1.4h-1.4z M1185.9 950.5h1.4v1.4h-1.4z M1354.9 950.5h1.4v1.4h-1.4z M1523.9 950.5h1.4v1.4h-1.4z M4 950.5h3v1.4h-3z M1690 950.5h3v1.4h-3z M846 950.5h6v1.4h-6z M171.9 957.8h1.4v1.4h-1.4z M340.9 957.8h1.4v1.4h-1.4z M509.9 957.8h1.4v1.4h-1.4z M678.9 957.8h1.4v1.4h-1.4z M1016.9 957.8h1.4v1.4h-1.4z M1185.9 957.8h1.4v1.4h-1.4z M1354.9 957.8h1.4v1.4h-1.4z M1523.9 957.8h1.4v1.4h-1.4z M4 957.8h3v1.4h-3z M1690 957.8h3v1.4h-3z M846 957.8h6v1.4h-6z" fill="#8c94b0"/>
<path d="M36.7 816.5h1.4v7h-1.4z M70.5 816.5h1.4v7h-1.4z M104.3 816.5h1.4v7h-1.4z M138.1 816.5h1.4v7h-1.4z M171.9 816.5h1.4v7h-1.4z M205.7 816.5h1.4v7h-1.4z M239.5 816.5h1.4v7h-1.4z M273.3 816.5h1.4v7h-1.4z M307.1 816.5h1.4v7h-1.4z M340.9 816.5h1.4v7h-1.4z M374.7 816.5h1.4v7h-1.4z M408.5 816.5h1.4v7h-1.4z M442.3 816.5h1.4v7h-1.4z M476.1 816.5h1.4v7h-1.4z M509.9 816.5h1.4v7h-1.4z M543.7 816.5h1.4v7h-1.4z M577.5 816.5h1.4v7h-1.4z M611.3 816.5h1.4v7h-1.4z M645.1 816.5h1.4v7h-1.4z M678.9 816.5h1.4v7h-1.4z M712.7 816.5h1.4v7h-1.4z M746.5 816.5h1.4v7h-1.4z M780.3 816.5h1.4v7h-1.4z M814.1 816.5h1.4v7h-1.4z M847.9 816.5h1.4v7h-1.4z M881.7 816.5h1.4v7h-1.4z M915.5 816.5h1.4v7h-1.4z M949.3 816.5h1.4v7h-1.4z M983.1 816.5h1.4v7h-1.4z M1016.9 816.5h1.4v7h-1.4z M1050.7 816.5h1.4v7h-1.4z M1084.5 816.5h1.4v7h-1.4z M1118.3 816.5h1.4v7h-1.4z M1152.1 816.5h1.4v7h-1.4z M1185.9 816.5h1.4v7h-1.4z M1219.7 816.5h1.4v7h-1.4z M1253.5 816.5h1.4v7h-1.4z M1287.3 816.5h1.4v7h-1.4z M1321.1 816.5h1.4v7h-1.4z M1354.9 816.5h1.4v7h-1.4z M1388.7 816.5h1.4v7h-1.4z M1422.5 816.5h1.4v7h-1.4z M1456.3 816.5h1.4v7h-1.4z M1490.1 816.5h1.4v7h-1.4z M1523.9 816.5h1.4v7h-1.4z M1557.7 816.5h1.4v7h-1.4z M1591.5 816.5h1.4v7h-1.4z M1625.3 816.5h1.4v7h-1.4z M1659.1 816.5h1.4v7h-1.4z" fill="#8c94b0"/>
<rect x="3" y="819" width="1691" height="1.4" fill="#a4acc4"/>
<rect x="848" y="672" width="1.4" height="292" fill="#a4acc4"/>
<clipPath id="wc"><rect x="3" y="672" width="1691" height="292"/></clipPath><g clip-path="url(#wc)">
<path d="M3.00 867.3H4.75V867.5H7.09V867.6H9.44V867.8H11.79V868.0H14.13V868.2H16.48V868.4H18.83V868.6H21.18V868.8H23.52V868.9H25.87V855.3H28.22V832.3H30.56V814.7H32.91V803.7H35.26V794.1H37.60V785.7H39.95V778.1H42.30V772.0H44.65V771.1H46.99V775.0H49.34V783.2H51.69V798.8H54.03V824.8H56.38V863.5H58.73V869.2H61.07V868.9H63.42V868.6H65.77V868.3H68.12V868.0H70.46V867.7H72.81V867.4H75.16V867.1H77.50V866.8H79.85V866.5H82.20V866.2H84.55V865.8H86.89V865.5H89.24V865.2H91.59V864.9H93.93V864.6H96.28V855.4H98.63V832.4H100.97V814.8H103.32V803.8H105.67V794.1H108.02V785.8H110.36V778.2H112.71V772.0H115.06V771.1H117.40V774.9H119.75V783.1H122.10V798.7H124.44V824.6H126.79V861.7H129.14V866.2H131.49V866.3H133.83V866.5H136.18V866.7H138.53V866.9H140.87V867.1H143.22V867.3H145.57V867.5H147.91V867.6H150.26V867.8H152.61V868.0H154.96V868.2H157.30V868.4H159.65V868.6H162.00V868.8H164.34V868.9H166.69V855.6H169.04V832.5H171.38V814.9H173.73V803.8H176.08V794.2H178.43V785.8H180.77V778.2H183.12V772.1H185.47V771.1H187.81V774.9H190.16V783.0H192.51V798.5H194.85V824.4H197.20V863.0H199.55V869.2H201.90V868.9H204.24V868.6H206.59V868.3H208.94V868.0H211.28V867.7H213.63V867.4H215.98V867.1H218.32V866.8H220.67V866.5H223.02V866.2H225.37V865.8H227.71V865.5H230.06V865.2H232.41V864.9H234.75V864.6H237.10V855.8H239.45V832.7H241.79V815.0H244.14V803.9H246.49V794.2H248.84V785.9H251.18V778.3H253.53V772.1H255.88V771.0H258.22V774.9H260.57V783.0H262.92V798.4H265.26V824.3H267.61V861.4H269.96V866.1H272.30V866.3H274.65V866.5H277.00V866.7H279.35V866.9H281.69V867.1H284.04V867.3H286.39V867.4H288.73V867.6H291.08V867.8H293.43V868.0H295.77V868.2H298.12V868.4H300.47V868.6H302.82V868.7H305.16V868.9H307.51V855.9H309.86V832.8H312.20V815.0H314.55V804.0H316.90V794.3H319.24V785.9H321.59V778.3H323.94V772.2H326.29V771.0H328.63V774.8H330.98V782.9H333.33V798.3H335.67V824.1H338.02V862.6H340.37V869.3H342.71V868.9H345.06V868.6H347.41V868.3H349.76V868.0H352.10V867.7H354.45V867.4H356.80V867.1H359.14V866.8H361.49V866.5H363.84V866.2H366.18V865.9H368.53V865.5H370.88V865.2H373.23V864.9H375.57V864.6H377.92V856.0H380.27V832.9H382.61V815.1H384.96V804.0H387.31V794.3H389.65V786.0H392.00V778.4H394.35V772.2H396.70V771.0H399.04V774.8H401.39V782.9H403.74V798.2H406.08V823.9H408.43V861.1H410.78V866.1H413.12V866.3H415.47V866.5H417.82V866.7H420.17V866.9H422.51V867.1H424.86V867.3H427.21V867.4H429.55V867.6H431.90V867.8H434.25V868.0H436.59V868.2H438.94V868.4H441.29V868.6H443.64V868.7H445.98V868.9H448.33V856.2H450.68V833.0H453.02V815.2H455.37V804.1H457.72V794.4H460.06V786.0H462.41V778.4H464.76V772.2H467.11V771.0H469.45V774.8H471.80V782.8H474.15V798.0H476.49V823.7H478.84V862.2H481.19V869.3H483.53V868.9H485.88V868.6H488.23V868.3H490.58V868.0H492.92V867.7H495.27V867.4H497.62V867.1H499.96V866.8H502.31V866.5H504.66V866.2H507.00V865.9H509.35V865.5H511.70V865.2H514.05V864.9H516.39V864.6H518.74V856.2H521.09V833.1H523.43V815.2H525.78V804.1H528.13V794.5H530.48V786.1H532.82V778.4H535.17V772.3H537.52V771.0H539.86V774.7H542.21V782.7H544.56V797.9H546.90V823.5H549.25V860.8H551.60V866.1H553.94V866.3H556.29V866.5H558.64V866.7H560.99V866.9H563.33V867.1H565.68V867.3H568.03V867.4H570.37V867.6H572.72V867.8H575.07V868.0H577.41V868.2H579.76V868.4H582.11V868.6H584.46V868.7H586.80V868.9H589.15V856.4H591.50V833.2H593.84V815.3H596.19V804.2H598.54V794.5H600.88V786.1H603.23V778.5H605.58V772.3H607.93V771.0H610.27V774.7H612.62V782.7H614.97V797.8H617.31V823.4H619.66V861.8H622.01V869.3H624.36V869.0H626.70V868.6H629.05V868.3H631.40V868.0H633.74V867.7H636.09V867.4H638.44V867.1H640.78V866.8H643.13V866.5H645.48V866.2H647.82V865.9H650.17V865.5H652.52V865.2H654.87V864.9H657.21V864.6H659.56V856.4H661.91V833.4H664.25V815.4H666.60V804.3H668.95V794.6H671.29V786.2H673.64V778.5H675.99V772.3H678.34V771.0H680.68V774.6H683.03V782.6H685.38V797.6H687.72V823.2H690.07V860.5H692.42V866.1H694.76V866.3H697.11V866.5H699.46V866.7H701.81V866.9H704.15V867.1H706.50V867.3H708.85V867.4H711.19V867.6H713.54V867.8H715.89V868.0H718.24V868.2H720.58V868.4H722.93V868.6H725.28V868.7H727.62V868.9H729.97V856.7H732.32V833.5H734.66V815.5H737.01V804.3H739.36V794.6H741.70V786.2H744.05V778.6H746.40V772.4H748.75V771.0H751.09V774.6H753.44V782.6H755.79V797.5H758.13V823.0H760.48V861.3H762.83V869.3H765.17V869.0H767.52V868.6H769.87V868.3H772.22V868.0H774.56V867.7H776.91V867.4H779.26V867.1H781.60V866.8H783.95V866.5H786.30V866.2H788.64V865.9H790.99V865.6H793.34V865.2H795.69V864.9H798.03V864.6H800.38V856.5H802.73V833.6H805.07V815.5H807.42V804.4H809.77V794.7H812.12V786.3H814.46V778.6H816.81V772.4H819.16V770.9H821.50V774.6H823.85V782.5H826.20V797.4H828.54V822.8H830.89V860.2H833.24V866.1H835.58V866.3H837.93V866.5H840.28V866.7H842.63V866.9H844.97V867.1H847.32V867.3H849.67V867.4H852.01V867.6H854.36V867.8H856.71V868.0H859.05V868.2H861.40V868.4H863.75V868.6H866.10V868.7H868.44V868.9H870.79V857.0H873.14V833.7H875.48V815.6H877.83V804.5H880.18V794.7H882.52V786.3H884.87V778.7H887.22V772.5H889.57V770.9H891.91V774.5H894.26V782.4H896.61V797.3H898.95V822.6H901.30V860.9H903.65V869.3H906.00V869.0H908.34V868.7H910.69V868.3H913.04V868.0H915.38V867.7H917.73V867.4H920.08V867.1H922.42V866.8H924.77V866.5H927.12V866.2H929.46V865.9H931.81V865.6H934.16V865.2H936.51V864.9H938.85V864.6H941.20V856.7H943.55V833.8H945.89V815.7H948.24V804.5H950.59V794.8H952.93V786.4H955.28V778.7H957.63V772.5H959.98V770.9H962.32V774.5H964.67V782.4H967.02V797.1H969.36V822.5H971.71V859.9H974.06V866.1H976.40V866.3H978.75V866.5H981.10V866.7H983.45V866.9H985.79V867.1H988.14V867.3H990.49V867.4H992.83V867.6H995.18V867.8H997.53V868.0H999.88V868.2H1002.22V868.4H1004.57V868.6H1006.92V868.7H1009.26V868.9H1011.61V857.2H1013.96V833.9H1016.30V815.7H1018.65V804.6H1021.00V794.8H1023.34V786.4H1025.69V778.8H1028.04V772.5H1030.39V770.9H1032.73V774.5H1035.08V782.3H1037.43V797.0H1039.77V822.3H1042.12V860.5H1044.47V869.3H1046.82V869.0H1049.16V868.7H1051.51V868.3H1053.86V868.0H1056.20V867.7H1058.55V867.4H1060.90V867.1H1063.24V866.8H1065.59V866.5H1067.94V866.2H1070.29V865.9H1072.63V865.6H1074.98V865.3H1077.33V864.9H1079.67V864.6H1082.02V856.9H1084.37V834.1H1086.71V815.8H1089.06V804.6H1091.41V794.9H1093.76V786.5H1096.10V778.8H1098.45V772.6H1100.80V770.9H1103.14V774.4H1105.49V782.3H1107.84V796.9H1110.18V822.1H1112.53V859.6H1114.88V866.1H1117.23V866.3H1119.57V866.5H1121.92V866.7H1124.27V866.9H1126.61V867.1H1128.96V867.2H1131.31V867.4H1133.65V867.6H1136.00V867.8H1138.35V868.0H1140.70V868.2H1143.04V868.4H1145.39V868.5H1147.74V868.7H1150.08V868.9H1152.43V857.5H1154.78V834.2H1157.12V815.9H1159.47V804.7H1161.82V794.9H1164.17V786.6H1166.51V778.9H1168.86V772.6H1171.21V770.9H1173.55V774.4H1175.90V782.2H1178.25V796.7H1180.59V821.9H1182.94V860.0H1185.29V869.3H1187.63V869.0H1189.98V868.7H1192.33V868.3H1194.68V868.0H1197.02V867.7H1199.37V867.4H1201.72V867.1H1204.06V866.8H1206.41V866.5H1208.76V866.2H1211.11V865.9H1213.45V865.6H1215.80V865.3H1218.15V864.9H1220.49V864.6H1222.84V857.0H1225.19V834.4H1227.53V816.0H1229.88V804.8H1232.23V795.0H1234.58V786.6H1236.92V778.9H1239.27V772.6H1241.62V770.9H1243.96V774.3H1246.31V782.1H1248.66V796.6H1251.00V821.7H1253.35V859.3H1255.70V866.1H1258.05V866.3H1260.39V866.5H1262.74V866.7H1265.09V866.9H1267.43V867.1H1269.78V867.2H1272.13V867.4H1274.47V867.6H1276.82V867.8H1279.17V868.0H1281.52V868.2H1283.86V868.4H1286.21V868.5H1288.56V868.7H1290.90V868.9H1293.25V857.7H1295.60V834.5H1297.94V816.0H1300.29V804.8H1302.64V795.0H1304.99V786.7H1307.33V779.0H1309.68V772.7H1312.03V770.9H1314.37V774.3H1316.72V782.1H1319.07V796.5H1321.41V821.6H1323.76V859.6H1326.11V869.3H1328.46V869.0H1330.80V868.7H1333.15V868.4H1335.50V868.0H1337.84V867.7H1340.19V867.4H1342.54V867.1H1344.88V866.8H1347.23V866.5H1349.58V866.2H1351.93V865.9H1354.27V865.6H1356.62V865.3H1358.97V864.9H1361.31V864.6H1363.66V857.2H1366.01V834.7H1368.35V816.2H1370.70V804.9H1373.05V795.1H1375.39V786.7H1377.74V779.0H1380.09V772.7H1382.44V770.8H1384.78V774.3H1387.13V782.0H1389.48V796.4H1391.82V821.4H1394.17V859.0H1396.52V866.1H1398.87V866.3H1401.21V866.5H1403.56V866.7H1405.91V866.9H1408.25V867.1H1410.60V867.2H1412.95V867.4H1415.29V867.6H1417.64V867.8H1419.99V868.0H1422.34V868.2H1424.68V868.4H1427.03V868.5H1429.38V868.7H1431.72V868.9H1434.07V858.0H1436.42V834.8H1438.76V816.3H1441.11V805.0H1443.46V795.2H1445.81V786.8H1448.15V779.1H1450.50V772.8H1452.85V770.8H1455.19V774.2H1457.54V782.0H1459.89V796.2H1462.23V821.2H1464.58V859.2H1466.93V869.3H1469.28V869.0H1471.62V868.7H1473.97V868.4H1476.32V868.0H1478.66V867.7H1481.01V867.4H1483.36V867.1H1485.70V866.8H1488.05V866.5H1490.40V866.2H1492.75V865.9H1495.09V865.6H1497.44V865.3H1499.79V865.0H1502.13V864.6H1504.48V857.4H1506.83V835.0H1509.17V816.4H1511.52V805.0H1513.87V795.2H1516.22V786.8H1518.56V779.1H1520.91V772.8H1523.26V770.8H1525.60V774.2H1527.95V781.9H1530.30V796.1H1532.64V821.0H1534.99V858.7H1537.34V866.1H1539.69V866.3H1542.03V866.5H1544.38V866.7H1546.73V866.9H1549.07V867.1H1551.42V867.2H1553.77V867.4H1556.11V867.6H1558.46V867.8H1560.81V868.0H1563.15V868.2H1565.50V868.4H1567.85V868.5H1570.20V868.7H1572.54V868.9H1574.89V858.3H1577.24V835.1H1579.58V816.5H1581.93V805.1H1584.28V795.3H1586.62V786.9H1588.97V779.2H1591.32V772.8H1593.67V770.8H1596.01V774.2H1598.36V781.8H1600.71V796.0H1603.05V820.8H1605.40V858.7H1607.75V869.3H1610.10V869.0H1612.44V868.7H1614.79V868.4H1617.14V868.1H1619.48V867.7H1621.83V867.4H1624.18V867.1H1626.52V866.8H1628.87V866.5H1631.22V866.2H1633.57V865.9H1635.91V865.6H1638.26V865.3H1640.61V865.0H1642.95V864.6H1645.30V857.6H1647.65V835.3H1649.99V816.6H1652.34V805.2H1654.69V795.4H1657.04V786.9H1659.38V779.2H1661.73V772.9H1664.08V770.8H1666.42V774.1H1668.77V781.8H1671.12V795.9H1673.46V820.7H1675.81V858.4H1678.16V866.1H1680.51V866.3H1682.85V866.5H1685.20V866.7H1687.55V866.9H1689.89V867.1H1692.24V867.2H1694.59V867.4" fill="none" stroke="#c88c00" stroke-width="2.2" stroke-linejoin="miter" stroke-linecap="square"/>
<path d="M3.00 825.4H4.75V808.8H7.09V781.3H9.44V768.0H11.79V752.2H14.13V738.6H16.48V725.2H18.83V709.9H21.18V700.1H23.52V698.1H25.87V697.4H28.22V696.7H30.56V695.9H32.91V695.2H35.26V694.4H37.60V693.6H39.95V692.8H42.30V691.9H44.65V691.0H46.99V690.1H49.34V689.2H51.69V688.3H54.03V687.6H56.38V687.8H58.73V689.6H61.07V735.9H63.42V752.2H65.77V766.4H68.12V783.2H70.46V800.6H72.81V814.5H75.16V830.8H77.50V858.2H79.85V871.4H82.20V887.0H84.55V900.5H86.89V913.7H89.24V928.9H91.59V938.6H93.93V940.7H96.28V941.4H98.63V942.1H100.97V942.8H103.32V943.6H105.67V944.4H108.02V945.2H110.36V946.0H112.71V946.8H115.06V947.7H117.40V948.6H119.75V949.5H122.10V950.4H124.44V951.0H126.79V950.9H129.14V950.1H131.49V904.8H133.83V887.2H136.18V873.2H138.53V856.5H140.87V839.3H143.22V825.5H145.57V809.3H147.91V781.5H150.26V768.2H152.61V752.4H154.96V738.8H157.30V725.4H159.65V710.1H162.00V700.2H164.34V698.1H166.69V697.4H169.04V696.7H171.38V695.9H173.73V695.2H176.08V694.4H178.43V693.6H180.77V692.8H183.12V691.9H185.47V691.0H187.81V690.1H190.16V689.2H192.51V688.3H194.85V687.6H197.20V687.8H199.55V688.0H201.90V735.7H204.24V752.0H206.59V766.2H208.94V783.0H211.28V800.4H213.63V814.4H215.98V830.3H218.32V858.1H220.67V871.2H223.02V886.8H225.37V900.3H227.71V913.5H230.06V928.7H232.41V938.5H234.75V940.7H237.10V941.4H239.45V942.1H241.79V942.8H244.14V943.6H246.49V944.4H248.84V945.2H251.18V946.0H253.53V946.8H255.88V947.7H258.22V948.6H260.57V949.5H262.92V950.4H265.26V951.0H267.61V950.9H269.96V950.7H272.30V905.0H274.65V887.5H277.00V873.3H279.35V856.7H281.69V839.5H284.04V825.6H286.39V809.8H288.73V781.6H291.08V768.4H293.43V752.6H295.77V738.9H298.12V725.6H300.47V710.3H302.82V700.3H305.16V698.1H307.51V697.4H309.86V696.7H312.20V695.9H314.55V695.2H316.90V694.4H319.24V693.6H321.59V692.8H323.94V691.9H326.29V691.0H328.63V690.1H330.98V689.2H333.33V688.3H335.67V687.6H338.02V687.8H340.37V688.0H342.71V735.5H345.06V751.8H347.41V766.0H349.76V782.8H352.10V800.2H354.45V814.3H356.80V829.8H359.14V857.9H361.49V871.0H363.84V886.6H366.18V900.2H368.53V913.4H370.88V928.5H373.23V938.4H375.57V940.7H377.92V941.4H380.27V942.1H382.61V942.8H384.96V943.6H387.31V944.4H389.65V945.2H392.00V946.0H394.35V946.8H396.70V947.7H399.04V948.6H401.39V949.5H403.74V950.4H406.08V951.0H408.43V950.9H410.78V950.7H413.12V905.3H415.47V887.7H417.82V873.5H420.17V856.9H422.51V839.7H424.86V825.7H427.21V810.3H429.55V781.8H431.90V768.6H434.25V752.8H436.59V739.1H438.94V725.8H441.29V710.5H443.64V700.4H445.98V698.1H448.33V697.4H450.68V696.7H453.02V696.0H455.37V695.2H457.72V694.4H460.06V693.6H462.41V692.8H464.76V691.9H467.11V691.0H469.45V690.1H471.80V689.2H474.15V688.3H476.49V687.6H478.84V687.8H481.19V688.0H483.53V735.4H485.88V751.5H488.23V765.9H490.58V782.6H492.92V800.0H495.27V814.3H497.62V829.3H499.96V857.8H502.31V870.8H504.66V886.4H507.00V900.0H509.35V913.2H511.70V928.3H514.05V938.3H516.39V940.6H518.74V941.4H521.09V942.1H523.43V942.8H525.78V943.6H528.13V944.4H530.48V945.1H532.82V945.9H535.17V946.8H537.52V947.7H539.86V948.6H542.21V949.5H544.56V950.4H546.90V951.0H549.25V950.9H551.60V950.7H553.94V905.5H556.29V887.9H558.64V873.7H560.99V857.2H563.33V840.0H565.68V825.7H568.03V810.8H570.37V781.9H572.72V768.8H575.07V753.0H577.41V739.3H579.76V726.0H582.11V710.7H584.46V700.5H586.80V698.1H589.15V697.4H591.50V696.7H593.84V696.0H596.19V695.2H598.54V694.4H600.88V693.6H603.23V692.8H605.58V691.9H607.93V691.0H610.27V690.1H612.62V689.2H614.97V688.3H617.31V687.6H619.66V687.8H622.01V688.0H624.36V735.2H626.70V751.3H629.05V765.7H631.40V782.3H633.74V799.7H636.09V814.1H638.44V828.8H640.78V857.6H643.13V870.6H645.48V886.2H647.82V899.9H650.17V913.0H652.52V928.1H654.87V938.3H657.21V940.6H659.56V941.4H661.91V942.1H664.25V942.8H666.60V943.6H668.95V944.3H671.29V945.1H673.64V945.9H675.99V946.8H678.34V947.7H680.68V948.6H683.03V949.5H685.38V950.3H687.72V951.0H690.07V950.9H692.42V950.7H694.76V905.7H697.11V888.1H699.46V873.9H701.81V857.4H704.15V840.2H706.50V825.9H708.85V816.2H711.19V782.0H713.54V769.0H715.89V753.2H718.24V739.4H720.58V726.1H722.93V710.9H725.28V700.6H727.62V698.2H729.97V697.4H732.32V696.7H734.66V696.0H737.01V695.2H739.36V694.4H741.70V693.6H744.05V692.8H746.40V691.9H748.75V691.0H751.09V690.1H753.44V689.2H755.79V688.3H758.13V687.6H760.48V687.8H762.83V688.0H765.17V735.0H767.52V751.1H769.87V765.5H772.22V782.1H774.56V799.5H776.91V814.0H779.26V820.2H781.60V857.5H783.95V870.4H786.30V886.0H788.64V899.7H790.99V912.8H793.34V927.9H795.69V938.2H798.03V940.6H800.38V941.3H802.73V942.1H805.07V942.8H807.42V943.5H809.77V944.3H812.12V945.1H814.46V945.9H816.81V946.8H819.16V947.7H821.50V948.6H823.85V949.4H826.20V950.3H828.54V951.0H830.89V950.9H833.24V950.7H835.58V906.0H837.93V888.3H840.28V874.0H842.63V857.6H844.97V840.4H847.32V826.1H849.67V820.0H852.01V782.2H854.36V769.2H856.71V753.4H859.05V739.6H861.40V726.3H863.75V711.1H866.10V700.7H868.44V698.2H870.79V697.4H873.14V696.7H875.48V696.0H877.83V695.2H880.18V694.4H882.52V693.6H884.87V692.8H887.22V691.9H889.57V691.0H891.91V690.1H894.26V689.3H896.61V688.4H898.95V687.6H901.30V687.8H903.65V688.0H906.00V734.9H908.34V750.9H910.69V765.3H913.04V781.9H915.38V799.3H917.73V813.8H920.08V819.9H922.42V857.4H924.77V870.2H927.12V885.8H929.46V899.6H931.81V912.6H934.16V927.7H936.51V938.1H938.85V940.6H941.20V941.3H943.55V942.1H945.89V942.8H948.24V943.5H950.59V944.3H952.93V945.1H955.28V945.9H957.63V946.8H959.98V947.7H962.32V948.6H964.67V949.4H967.02V950.3H969.36V951.1H971.71V950.9H974.06V950.7H976.40V906.2H978.75V888.6H981.10V874.2H983.45V857.8H985.79V840.6H988.14V826.3H990.49V820.1H992.83V782.3H995.18V769.4H997.53V753.6H999.88V739.7H1002.22V726.5H1004.57V711.3H1006.92V700.8H1009.26V698.2H1011.61V697.4H1013.96V696.7H1016.30V696.0H1018.65V695.2H1021.00V694.4H1023.34V693.6H1025.69V692.8H1028.04V691.9H1030.39V691.0H1032.73V690.2H1035.08V689.3H1037.43V688.4H1039.77V687.6H1042.12V687.8H1044.47V688.0H1046.82V734.7H1049.16V750.6H1051.51V765.2H1053.86V781.7H1056.20V799.1H1058.55V813.6H1060.90V819.9H1063.24V857.2H1065.59V870.0H1067.94V885.6H1070.29V899.4H1072.63V912.5H1074.98V927.5H1077.33V938.0H1079.67V940.6H1082.02V941.3H1084.37V942.0H1086.71V942.8H1089.06V943.5H1091.41V944.3H1093.76V945.1H1096.10V945.9H1098.45V946.8H1100.80V947.7H1103.14V948.5H1105.49V949.4H1107.84V950.3H1110.18V951.1H1112.53V950.9H1114.88V950.7H1117.23V906.5H1119.57V888.8H1121.92V874.4H1124.27V858.0H1126.61V840.8H1128.96V826.4H1131.31V820.2H1133.65V782.5H1136.00V769.6H1138.35V753.8H1140.70V739.9H1143.04V726.7H1145.39V711.5H1147.74V700.9H1150.08V698.2H1152.43V697.5H1154.78V696.7H1157.12V696.0H1159.47V695.2H1161.82V694.4H1164.17V693.6H1166.51V692.8H1168.86V692.0H1171.21V691.1H1173.55V690.2H1175.90V689.3H1178.25V688.4H1180.59V687.6H1182.94V687.8H1185.29V688.0H1187.63V734.6H1189.98V750.4H1192.33V765.0H1194.68V781.5H1197.02V798.8H1199.37V813.4H1201.72V819.8H1204.06V857.1H1206.41V869.8H1208.76V885.4H1211.11V899.3H1213.45V912.3H1215.80V927.3H1218.15V937.9H1220.49V940.6H1222.84V941.3H1225.19V942.0H1227.53V942.8H1229.88V943.5H1232.23V944.3H1234.58V945.1H1236.92V945.9H1239.27V946.8H1241.62V947.6H1243.96V948.5H1246.31V949.4H1248.66V950.3H1251.00V951.1H1253.35V950.9H1255.70V950.7H1258.05V906.7H1260.39V889.0H1262.74V874.5H1265.09V858.3H1267.43V841.1H1269.78V826.6H1272.13V820.2H1274.47V782.6H1276.82V769.8H1279.17V754.0H1281.52V740.0H1283.86V726.9H1286.21V711.7H1288.56V701.0H1290.90V698.2H1293.25V697.5H1295.60V696.7H1297.94V696.0H1300.29V695.2H1302.64V694.4H1304.99V693.6H1307.33V692.8H1309.68V692.0H1312.03V691.1H1314.37V690.2H1316.72V689.3H1319.07V688.4H1321.41V687.6H1323.76V687.8H1326.11V688.0H1328.46V734.4H1330.80V750.2H1333.15V764.8H1335.50V781.2H1337.84V798.6H1340.19V813.2H1342.54V819.7H1344.88V856.9H1347.23V869.6H1349.58V885.2H1351.93V899.1H1354.27V912.1H1356.62V927.1H1358.97V937.8H1361.31V940.6H1363.66V941.3H1366.01V942.0H1368.35V942.7H1370.70V943.5H1373.05V944.3H1375.39V945.1H1377.74V945.9H1380.09V946.7H1382.44V947.6H1384.78V948.5H1387.13V949.4H1389.48V950.3H1391.82V951.1H1394.17V950.9H1396.52V950.7H1398.87V906.9H1401.21V889.2H1403.56V874.7H1405.91V858.5H1408.25V841.3H1410.60V826.8H1412.95V820.3H1415.29V782.8H1417.64V770.0H1419.99V754.2H1422.34V740.2H1424.68V727.1H1427.03V711.9H1429.38V701.1H1431.72V698.2H1434.07V697.5H1436.42V696.7H1438.76V696.0H1441.11V695.3H1443.46V694.5H1445.81V693.7H1448.15V692.9H1450.50V692.0H1452.85V691.1H1455.19V690.2H1457.54V689.3H1459.89V688.4H1462.23V687.6H1464.58V687.8H1466.93V688.0H1469.28V734.2H1471.62V750.0H1473.97V764.7H1476.32V781.0H1478.66V798.4H1481.01V813.1H1483.36V819.6H1485.70V856.8H1488.05V869.4H1490.40V885.0H1492.75V898.9H1495.09V911.9H1497.44V926.9H1499.79V937.7H1502.13V940.6H1504.48V941.3H1506.83V942.0H1509.17V942.7H1511.52V943.5H1513.87V944.3H1516.22V945.1H1518.56V945.9H1520.91V946.7H1523.26V947.6H1525.60V948.5H1527.95V949.4H1530.30V950.3H1532.64V951.1H1534.99V950.9H1537.34V950.7H1539.69V907.2H1542.03V889.4H1544.38V874.9H1546.73V858.7H1549.07V841.5H1551.42V827.0H1553.77V820.4H1556.11V782.9H1558.46V770.2H1560.81V754.4H1563.15V740.3H1565.50V727.2H1567.85V712.1H1570.20V701.2H1572.54V698.2H1574.89V697.5H1577.24V696.8H1579.58V696.0H1581.93V695.3H1584.28V694.5H1586.62V693.7H1588.97V692.9H1591.32V692.0H1593.67V691.1H1596.01V690.2H1598.36V689.3H1600.71V688.4H1603.05V687.6H1605.40V687.8H1607.75V688.0H1610.10V734.1H1612.44V749.8H1614.79V764.5H1617.14V780.8H1619.48V798.2H1621.83V812.9H1624.18V819.6H1626.52V856.7H1628.87V869.2H1631.22V884.8H1633.57V898.8H1635.91V911.7H1638.26V926.7H1640.61V937.6H1642.95V940.6H1645.30V941.3H1647.65V942.0H1649.99V942.7H1652.34V943.5H1654.69V944.3H1657.04V945.1H1659.38V945.9H1661.73V946.7H1664.08V947.6H1666.42V948.5H1668.77V949.4H1671.12V950.3H1673.46V951.1H1675.81V950.9H1678.16V950.7H1680.51V907.4H1682.85V889.7H1685.20V875.1H1687.55V858.9H1689.89V841.7H1692.24V827.1H1694.59V820.5" fill="none" stroke="#bcae00" stroke-width="2.2" stroke-linejoin="miter" stroke-linecap="square"/>
<path d="M3.00 822.0H4.75V822.0H7.09V822.0H9.44V822.0H11.79V822.0H14.13V822.0H16.48V822.0H18.83V822.0H21.18V822.0H23.52V822.0H25.87V797.1H28.22V773.1H30.56V750.4H32.91V730.0H35.26V712.1H37.60V698.6H39.95V690.8H42.30V684.7H44.65V684.1H46.99V692.4H49.34V707.5H51.69V726.6H54.03V759.4H56.38V822.0H58.73V822.0H61.07V822.0H63.42V822.0H65.77V822.0H68.12V822.0H70.46V822.0H72.81V822.0H75.16V822.0H77.50V822.0H79.85V822.0H82.20V822.0H84.55V822.0H86.89V822.0H89.24V822.0H91.59V822.0H93.93V822.0H96.28V842.3H98.63V865.8H100.97V888.1H103.32V908.1H105.67V925.7H108.02V938.9H110.36V946.5H112.71V952.6H115.06V953.2H117.40V945.2H119.75V930.3H122.10V911.8H124.44V879.6H126.79V822.0H129.14V822.0H131.49V822.0H133.83V822.0H136.18V822.0H138.53V822.0H140.87V822.0H143.22V822.0H145.57V822.0H147.91V822.0H150.26V822.0H152.61V822.0H154.96V822.0H157.30V822.0H159.65V822.0H162.00V822.0H164.34V822.0H166.69V797.5H169.04V773.4H171.38V750.7H173.73V730.2H176.08V712.3H178.43V698.8H180.77V690.9H183.12V684.7H185.47V684.1H187.81V692.2H190.16V707.3H192.51V726.2H194.85V758.8H197.20V822.0H199.55V822.0H201.90V822.0H204.24V822.0H206.59V822.0H208.94V822.0H211.28V822.0H213.63V822.0H215.98V822.0H218.32V822.0H220.67V822.0H223.02V822.0H225.37V822.0H227.71V822.0H230.06V822.0H232.41V822.0H234.75V822.0H237.10V841.9H239.45V865.5H241.79V887.8H244.14V907.9H246.49V925.4H248.84V938.8H251.18V946.4H253.53V952.5H255.88V953.2H258.22V945.4H260.57V930.5H262.92V912.1H265.26V880.2H267.61V822.0H269.96V822.0H272.30V822.0H274.65V822.0H277.00V822.0H279.35V822.0H281.69V822.0H284.04V822.0H286.39V822.0H288.73V822.0H291.08V822.0H293.43V822.0H295.77V822.0H298.12V822.0H300.47V822.0H302.82V822.0H305.16V822.0H307.51V797.9H309.86V773.7H312.20V751.0H314.55V730.4H316.90V712.5H319.24V698.8H321.59V691.0H323.94V684.8H326.29V684.0H328.63V692.0H330.98V707.1H333.33V725.8H335.67V758.3H338.02V822.0H340.37V822.0H342.71V822.0H345.06V822.0H347.41V822.0H349.76V822.0H352.10V822.0H354.45V822.0H356.80V822.0H359.14V822.0H361.49V822.0H363.84V822.0H366.18V822.0H368.53V822.0H370.88V822.0H373.23V822.0H375.57V822.0H377.92V841.5H380.27V865.3H382.61V887.5H384.96V907.6H387.31V925.2H389.65V938.7H392.00V946.3H394.35V952.5H396.70V953.3H399.04V945.5H401.39V930.8H403.74V912.5H406.08V880.8H408.43V822.0H410.78V822.0H413.12V822.0H415.47V822.0H417.82V822.0H420.17V822.0H422.51V822.0H424.86V822.0H427.21V822.0H429.55V822.0H431.90V822.0H434.25V822.0H436.59V822.0H438.94V822.0H441.29V822.0H443.64V822.0H445.98V822.0H448.33V798.3H450.68V774.0H453.02V751.3H455.37V730.7H457.72V712.7H460.06V698.9H462.41V691.1H464.76V684.9H467.11V684.0H469.45V691.8H471.80V706.9H474.15V725.4H476.49V757.7H478.84V822.0H481.19V822.0H483.53V822.0H485.88V822.0H488.23V822.0H490.58V822.0H492.92V822.0H495.27V822.0H497.62V822.0H499.96V822.0H502.31V822.0H504.66V822.0H507.00V822.0H509.35V822.0H511.70V822.0H514.05V822.0H516.39V822.0H518.74V841.1H521.09V865.0H523.43V887.2H525.78V907.4H528.13V925.0H530.48V938.6H532.82V946.2H535.17V952.4H537.52V953.3H539.86V945.7H542.21V931.0H544.56V912.9H546.90V881.4H549.25V822.0H551.60V822.0H553.94V822.0H556.29V822.0H558.64V822.0H560.99V822.0H563.33V822.0H565.68V822.0H568.03V822.0H570.37V822.0H572.72V822.0H575.07V822.0H577.41V822.0H579.76V822.0H582.11V822.0H584.46V822.0H586.80V822.0H589.15V798.7H591.50V774.2H593.84V751.6H596.19V730.9H598.54V713.0H600.88V699.1H603.23V691.2H605.58V684.9H607.93V684.0H610.27V691.6H612.62V706.7H614.97V725.1H617.31V757.1H619.66V822.0H622.01V822.0H624.36V822.0H626.70V822.0H629.05V822.0H631.40V822.0H633.74V822.0H636.09V822.0H638.44V822.0H640.78V822.0H643.13V822.0H645.48V822.0H647.82V822.0H650.17V822.0H652.52V822.0H654.87V822.0H657.21V822.0H659.56V840.7H661.91V864.7H664.25V886.9H666.60V907.2H668.95V924.8H671.29V938.4H673.64V946.1H675.99V952.3H678.34V953.3H680.68V945.9H683.03V931.2H685.38V913.2H687.72V881.9H690.07V822.0H692.42V822.0H694.76V822.0H697.11V822.0H699.46V822.0H701.81V822.0H704.15V822.0H706.50V822.0H708.85V822.0H711.19V822.0H713.54V822.0H715.89V822.0H718.24V822.0H720.58V822.0H722.93V822.0H725.28V822.0H727.62V822.0H729.97V799.1H732.32V774.5H734.66V751.9H737.01V731.2H739.36V713.2H741.70V699.3H744.05V691.3H746.40V685.0H748.75V683.9H751.09V691.5H753.44V706.4H755.79V724.7H758.13V756.5H760.48V822.0H762.83V822.0H765.17V822.0H767.52V822.0H769.87V822.0H772.22V822.0H774.56V822.0H776.91V822.0H779.26V822.0H781.60V822.0H783.95V822.0H786.30V822.0H788.64V822.0H790.99V822.0H793.34V822.0H795.69V822.0H798.03V822.0H800.38V840.3H802.73V864.4H805.07V886.6H807.42V906.9H809.77V924.6H812.12V938.2H814.46V946.1H816.81V952.3H819.16V953.4H821.50V946.1H823.85V931.4H826.20V913.6H828.54V882.5H830.89V822.0H833.24V822.0H835.58V822.0H837.93V822.0H840.28V822.0H842.63V822.0H844.97V822.0H847.32V822.0H849.67V822.0H852.01V822.0H854.36V822.0H856.71V822.0H859.05V822.0H861.40V822.0H863.75V822.0H866.10V822.0H868.44V822.0H870.79V799.5H873.14V774.8H875.48V752.2H877.83V731.4H880.18V713.4H882.52V699.4H884.87V691.4H887.22V685.1H889.57V683.9H891.91V691.3H894.26V706.2H896.61V724.3H898.95V755.9H901.30V822.0H903.65V822.0H906.00V822.0H908.34V822.0H910.69V822.0H913.04V822.0H915.38V822.0H917.73V822.0H920.08V822.0H922.42V822.0H924.77V822.0H927.12V822.0H929.46V822.0H931.81V822.0H934.16V822.0H936.51V822.0H938.85V822.0H941.20V839.9H943.55V864.2H945.89V886.3H948.24V906.7H950.59V924.3H952.93V938.1H955.28V946.0H957.63V952.2H959.98V953.4H962.32V946.2H964.67V931.6H967.02V913.9H969.36V883.1H971.71V822.0H974.06V822.0H976.40V822.0H978.75V822.0H981.10V822.0H983.45V822.0H985.79V822.0H988.14V822.0H990.49V822.0H992.83V822.0H995.18V822.0H997.53V822.0H999.88V822.0H1002.22V822.0H1004.57V822.0H1006.92V822.0H1009.26V822.0H1011.61V799.9H1013.96V775.1H1016.30V752.5H1018.65V731.7H1021.00V713.6H1023.34V699.6H1025.69V691.5H1028.04V685.1H1030.39V683.8H1032.73V691.1H1035.08V706.0H1037.43V724.0H1039.77V755.3H1042.12V822.0H1044.47V822.0H1046.82V822.0H1049.16V822.0H1051.51V822.0H1053.86V822.0H1056.20V822.0H1058.55V822.0H1060.90V822.0H1063.24V822.0H1065.59V822.0H1067.94V822.0H1070.29V822.0H1072.63V822.0H1074.98V822.0H1077.33V822.0H1079.67V822.0H1082.02V839.5H1084.37V863.9H1086.71V886.0H1089.06V906.5H1091.41V924.1H1093.76V937.9H1096.10V945.9H1098.45V952.1H1100.80V953.4H1103.14V946.4H1105.49V931.9H1107.84V914.3H1110.18V883.7H1112.53V822.0H1114.88V822.0H1117.23V822.0H1119.57V822.0H1121.92V822.0H1124.27V822.0H1126.61V822.0H1128.96V822.0H1131.31V822.0H1133.65V822.0H1136.00V822.0H1138.35V822.0H1140.70V822.0H1143.04V822.0H1145.39V822.0H1147.74V822.0H1150.08V822.0H1152.43V800.3H1154.78V775.4H1157.12V752.8H1159.47V731.9H1161.82V713.9H1164.17V699.8H1166.51V691.6H1168.86V685.2H1171.21V683.8H1173.55V690.9H1175.90V705.8H1178.25V723.6H1180.59V754.7H1182.94V822.0H1185.29V822.0H1187.63V822.0H1189.98V822.0H1192.33V822.0H1194.68V822.0H1197.02V822.0H1199.37V822.0H1201.72V822.0H1204.06V822.0H1206.41V822.0H1208.76V822.0H1211.11V822.0H1213.45V822.0H1215.80V822.0H1218.15V822.0H1220.49V822.0H1222.84V839.1H1225.19V863.6H1227.53V885.7H1229.88V906.2H1232.23V923.9H1234.58V937.7H1236.92V945.8H1239.27V952.1H1241.62V953.5H1243.96V946.6H1246.31V932.1H1248.66V914.7H1251.00V884.2H1253.35V822.0H1255.70V822.0H1258.05V822.0H1260.39V822.0H1262.74V822.0H1265.09V822.0H1267.43V822.0H1269.78V822.0H1272.13V822.0H1274.47V822.0H1276.82V822.0H1279.17V822.0H1281.52V822.0H1283.86V822.0H1286.21V822.0H1288.56V822.0H1290.90V822.0H1293.25V800.7H1295.60V775.6H1297.94V753.1H1300.29V732.1H1302.64V714.1H1304.99V699.9H1307.33V691.7H1309.68V685.3H1312.03V683.8H1314.37V690.7H1316.72V705.5H1319.07V723.2H1321.41V754.2H1323.76V822.0H1326.11V822.0H1328.46V822.0H1330.80V822.0H1333.15V822.0H1335.50V822.0H1337.84V822.0H1340.19V822.0H1342.54V822.0H1344.88V822.0H1347.23V822.0H1349.58V822.0H1351.93V822.0H1354.27V822.0H1356.62V822.0H1358.97V822.0H1361.31V822.0H1363.66V838.8H1366.01V863.3H1368.35V885.5H1370.70V906.0H1373.05V923.7H1375.39V937.6H1377.74V945.7H1380.09V952.0H1382.44V953.5H1384.78V946.8H1387.13V932.3H1389.48V915.0H1391.82V884.8H1394.17V822.0H1396.52V822.0H1398.87V822.0H1401.21V822.0H1403.56V822.0H1405.91V822.0H1408.25V822.0H1410.60V822.0H1412.95V822.0H1415.29V822.0H1417.64V822.0H1419.99V822.0H1422.34V822.0H1424.68V822.0H1427.03V822.0H1429.38V822.0H1431.72V822.0H1434.07V801.1H1436.42V775.9H1438.76V753.4H1441.11V732.4H1443.46V714.3H1445.81V700.1H1448.15V691.8H1450.50V685.3H1452.85V683.7H1455.19V690.6H1457.54V705.3H1459.89V722.9H1462.23V753.6H1464.58V822.0H1466.93V822.0H1469.28V822.0H1471.62V822.0H1473.97V822.0H1476.32V822.0H1478.66V822.0H1481.01V822.0H1483.36V822.0H1485.70V822.0H1488.05V822.0H1490.40V822.0H1492.75V822.0H1495.09V822.0H1497.44V822.0H1499.79V822.0H1502.13V822.0H1504.48V838.4H1506.83V863.1H1509.17V885.2H1511.52V905.7H1513.87V923.5H1516.22V937.4H1518.56V945.6H1520.91V951.9H1523.26V953.6H1525.60V946.9H1527.95V932.5H1530.30V915.3H1532.64V885.4H1534.99V822.0H1537.34V822.0H1539.69V822.0H1542.03V822.0H1544.38V822.0H1546.73V822.0H1549.07V822.0H1551.42V822.0H1553.77V822.0H1556.11V822.0H1558.46V822.0H1560.81V822.0H1563.15V822.0H1565.50V822.0H1567.85V822.0H1570.20V822.0H1572.54V822.0H1574.89V801.5H1577.24V776.2H1579.58V753.7H1581.93V732.6H1584.28V714.5H1586.62V700.3H1588.97V691.9H1591.32V685.4H1593.67V683.7H1596.01V690.4H1598.36V705.1H1600.71V722.7H1603.05V753.0H1605.40V822.0H1607.75V822.0H1610.10V822.0H1612.44V822.0H1614.79V822.0H1617.14V822.0H1619.48V822.0H1621.83V822.0H1624.18V822.0H1626.52V822.0H1628.87V822.0H1631.22V822.0H1633.57V822.0H1635.91V822.0H1638.26V822.0H1640.61V822.0H1642.95V822.0H1645.30V838.0H1647.65V862.8H1649.99V884.9H1652.34V905.5H1654.69V923.2H1657.04V937.2H1659.38V945.5H1661.73V951.9H1664.08V953.6H1666.42V947.1H1668.77V932.7H1671.12V915.5H1673.46V886.0H1675.81V822.0H1678.16V822.0H1680.51V822.0H1682.85V822.0H1685.20V822.0H1687.55V822.0H1689.89V822.0H1692.24V822.0H1694.59V822.0" fill="none" stroke="#0aaad0" stroke-width="2.2" stroke-linejoin="miter" stroke-linecap="square"/>
</g>
<path d="M1627 685 H1677.5 Q1681.5 685 1681.5 689 V734 Q1681.5 739 1677.5 735 Z" fill="#3a4152"/>
<circle cx="1670.4" cy="696.4" r="7.2" fill="none" stroke="#98a6c0" stroke-width="3"/>
<line x1="1664.6" y1="702.6" x2="1655" y2="712" stroke="#98a6c0" stroke-width="4" stroke-linecap="round"/>
<path d="M1669 820 L1682 806 V834 Z" fill="#b4aa3c"/><rect x="1682" y="818" width="12" height="4" fill="#b4aa3c"/>
</svg>
<svg class="a" style="left:0;top:795px" width="60" height="95">
<path d="M6 8 H40 L54 23 L40 38 H6 Z" fill="#000" stroke="#18b8e0" stroke-width="2"/>
<text x="10" y="30" font-family="Liberation Sans" font-size="18" fill="#18b8e0">C2</text>
<path d="M5 58 H41 L54 73 L41 88 H5 Z" fill="#c48a12"/>
<text x="11" y="80" font-family="Liberation Sans" font-size="19" fill="#000">M</text>
</svg>
<div class="a" style="left:1727px;top:30px;width:200px;height:938px;border-left:1px solid #5f5f5a;border-top:1px solid #5f5f5a;border-bottom:1px solid #5f5f5a"></div>
<svg class="a" style="left:1750px;top:0" width="150" height="32">
<text x="5" y="27.5" font-family="Liberation Sans" font-weight="bold" font-size="33" fill="#ffffff" textLength="136" lengthAdjust="spacingAndGlyphs">Tektronix</text>
<path d="M39.5 27.5 L46 27.5 L57 9 L50.5 9 Z" fill="#22b8c8" stroke="#30364a" stroke-width="0.8"/>
</svg>
<div class="a" style="left:1733px;top:36px;width:86px;height:60px;border:1.5px solid #707272;border-radius:11px"></div>
<div class="t" style="left:1735px;width:86px;text-align:center;top:56.1px;font-size:20px;color:#dce6f4">Cursors</div>
<div class="a" style="left:1829px;top:36px;width:86px;height:60px;border:1.5px solid #707272;border-radius:11px"></div>
<div class="t" style="left:1829px;width:86px;text-align:center;top:56.1px;font-size:20px;color:#dce6f4">Measure</div>
<div class="a" style="left:1733px;top:106px;width:86px;height:60px;border:1.5px solid #707272;border-radius:11px"></div>
<div class="t" style="left:1733px;width:86px;text-align:center;top:126.1px;font-size:20px;color:#dce6f4">Search</div>
<div class="a" style="left:1829px;top:106px;width:86px;height:60px;border:1.5px solid #27b8e8;border-radius:11px"></div>
<div class="t" style="left:1829px;width:86px;text-align:center;top:114.1px;font-size:20px;color:#dce6f4">Results</div>
<div class="t" style="left:1829px;width:86px;text-align:center;top:138.1px;font-size:20px;color:#dce6f4">Table</div>
<div class="a" style="left:1733px;top:171px;width:182px;height:1px;background:#5f5f5a;"></div>
<div class="a" style="left:1733px;top:178px;width:182px;height:296px;background:#9eafd0;border:1px solid #6a7080;border-radius:9px;overflow:hidden"><div style="height:26px;background:#3f4f68"></div></div>
<div class="t" style="left:1741.0px;top:182.1px;font-size:20px;color:#dce6f4;;transform:scaleY(1.06);transform-origin:0 84.65%">Power</div>
<div class="a" style="left:1834px;top:182px;width:35px;height:20px;background:#b1aa35;border:1px solid #2a2a20;border-radius:3px;font-size:18px;line-height:18px;text-align:center;color:#000;-webkit-text-stroke:0.3px #000">1</div>
<div class="a" style="left:1870px;top:182px;width:35px;height:20px;background:#17c5de;border:1px solid #2a2a20;border-radius:3px;font-size:18px;line-height:18px;text-align:center;color:#000;-webkit-text-stroke:0.3px #000">2</div>
<div class="t k" style="left:1744.0px;top:206.4px;font-size:20px;color:#000;word-spacing:2px;transform:scaleY(1.06);transform-origin:0 84.65%">Power Quality</div>
<div class="t k" style="left:1744.0px;top:230.6px;font-size:20px;color:#000;word-spacing:2px;transform:scaleY(1.06);transform-origin:0 84.65%">Freq:</div>
<div class="t k" style="left:1827.0px;top:230.6px;font-size:20px;color:#000;word-spacing:2px;transform:scaleY(1.06);transform-origin:0 84.65%">60.06 Hz</div>
<div class="t k" style="left:1744.0px;top:254.6px;font-size:20px;color:#000;word-spacing:2px;transform:scaleY(1.06);transform-origin:0 84.65%">VRMS:</div>
<div class="t k" style="left:1827.0px;top:254.6px;font-size:20px;color:#000;word-spacing:2px;transform:scaleY(1.06);transform-origin:0 84.65%">14.1 V</div>
<div class="t k" style="left:1744.0px;top:278.6px;font-size:20px;color:#000;word-spacing:2px;transform:scaleY(1.06);transform-origin:0 84.65%">IRMS:</div>
<div class="t k" style="left:1827.0px;top:278.6px;font-size:20px;color:#000;word-spacing:2px;transform:scaleY(1.06);transform-origin:0 84.65%">378 mA</div>
<div class="t k" style="left:1744.0px;top:302.6px;font-size:20px;color:#000;word-spacing:2px;transform:scaleY(1.06);transform-origin:0 84.65%">V CF:</div>
<div class="t k" style="left:1827.0px;top:302.6px;font-size:20px;color:#000;word-spacing:2px;transform:scaleY(1.06);transform-origin:0 84.65%">1.31</div>
<div class="t k" style="left:1744.0px;top:326.6px;font-size:20px;color:#000;word-spacing:2px;transform:scaleY(1.06);transform-origin:0 84.65%">I CF:</div>
<div class="t k" style="left:1827.0px;top:326.6px;font-size:20px;color:#000;word-spacing:2px;transform:scaleY(1.06);transform-origin:0 84.65%">2.01</div>
<div class="t k" style="left:1744.0px;top:350.6px;font-size:20px;color:#000;word-spacing:2px;transform:scaleY(1.06);transform-origin:0 84.65%">TrPwr:</div>
<div class="t k" style="left:1827.0px;top:350.6px;font-size:20px;color:#000;word-spacing:2px;transform:scaleY(1.06);transform-origin:0 84.65%">4.21 W</div>
<div class="t k" style="left:1744.0px;top:374.6px;font-size:20px;color:#000;word-spacing:2px;transform:scaleY(1.06);transform-origin:0 84.65%">RePwr:</div>
<div class="t k" style="left:1827.0px;top:374.6px;font-size:20px;color:#000;word-spacing:2px;transform:scaleY(1.06);transform-origin:0 84.65%">3.27...</div>
<div class="t k" style="left:1744.0px;top:398.6px;font-size:20px;color:#000;word-spacing:2px;transform:scaleY(1.06);transform-origin:0 84.65%">ApPwr:</div>
<div class="t k" style="left:1827.0px;top:398.6px;font-size:20px;color:#000;word-spacing:2px;transform:scaleY(1.06);transform-origin:0 84.65%">5.33 VA</div>
<div class="t k" style="left:1744.0px;top:422.6px;font-size:20px;color:#000;word-spacing:2px;transform:scaleY(1.06);transform-origin:0 84.65%">PF:</div>
<div class="t k" style="left:1827.0px;top:422.6px;font-size:20px;color:#000;word-spacing:2px;transform:scaleY(1.06);transform-origin:0 84.65%">790 m</div>
<div class="t k" style="left:1744.0px;top:446.6px;font-size:20px;color:#000;word-spacing:2px;transform:scaleY(1.06);transform-origin:0 84.65%">Phase:</div>
<div class="t k" style="left:1827.0px;top:446.6px;font-size:20px;color:#000;word-spacing:2px;transform:scaleY(1.06);transform-origin:0 84.65%">37.9 °</div>
<div class="a" style="left:1709px;top:492px;width:7px;height:7px;background:#b4c4e4;border-radius:50%"></div>
<div class="a" style="left:1709px;top:504px;width:7px;height:7px;background:#b4c4e4;border-radius:50%"></div>
<div class="a" style="left:1709px;top:516px;width:7px;height:7px;background:#b4c4e4;border-radius:50%"></div>
<div class="a" style="left:5px;top:972px;width:134px;height:104px;background:#9eafd0;border:1px solid #6a7080;border-radius:8px;overflow:hidden"><div style="height:26px;background:#4a4d42"></div></div>
<div class="t" style="left:13.0px;top:976.1px;font-size:20px;color:#c8c030;;transform:scaleY(1.06);transform-origin:0 84.65%">Ch 1</div>
<div class="t k" style="left:16.0px;top:1001.1px;font-size:20px;color:#000;word-spacing:2px;letter-spacing:0.4px;transform:scaleY(1.06);transform-origin:0 84.65%">5.00 V/div</div>
<div class="t k" style="left:16.0px;top:1025.1px;font-size:20px;color:#000;word-spacing:0px;transform:scaleY(1.06);transform-origin:0 84.65%">50 Ω</div>
<div class="t k" style="left:16.0px;top:1049.1px;font-size:20px;color:#000;word-spacing:0px;transform:scaleY(1.06);transform-origin:0 84.65%">100 MHz</div>
<div class="a" style="left:146px;top:972px;width:134px;height:104px;background:#9eafd0;border:1px solid #6a7080;border-radius:8px;overflow:hidden"><div style="height:26px;background:#0a3848"></div></div>
<div class="t" style="left:154.0px;top:976.1px;font-size:20px;color:#18c0e0;;transform:scaleY(1.06);transform-origin:0 84.65%">Ch 2</div>
<div class="t k" style="left:157.0px;top:1001.1px;font-size:20px;color:#000;word-spacing:2px;letter-spacing:0.4px;transform:scaleY(1.06);transform-origin:0 84.65%">200 mA/div</div>
<div class="t k" style="left:157.0px;top:1025.1px;font-size:20px;color:#000;word-spacing:0px;transform:scaleY(1.06);transform-origin:0 84.65%">1M Ω</div>
<div class="t k" style="left:157.0px;top:1049.1px;font-size:20px;color:#000;word-spacing:0px;transform:scaleY(1.06);transform-origin:0 84.65%">100 MHz</div>
<div class="a" style="left:287px;top:972px;width:134px;height:104px;background:#9eafd0;border:1px solid #6a7080;border-radius:8px;overflow:hidden"><div style="height:26px;background:#c0820f"></div></div>
<div class="t k" style="left:295.0px;top:976.1px;font-size:20px;color:#000;;transform:scaleY(1.06);transform-origin:0 84.65%">Math</div>
<div class="t k" style="left:298.0px;top:1001.1px;font-size:20px;color:#000;word-spacing:2px;letter-spacing:0.4px;transform:scaleY(1.06);transform-origin:0 84.65%">5.00 W/div</div>
<div class="t k" style="left:298.0px;top:1025.1px;font-size:20px;color:#000;word-spacing:0px;transform:scaleY(1.06);transform-origin:0 84.65%">Ch 1 * Ch 2</div>
<div class="a" style="left:838px;top:972px;width:60px;height:104px;border:1.5px solid #6e7070;border-radius:10px"></div>
<div class="a" style="left:847px;top:984px;width:42px;height:3px;background:#e05a8a;"></div>
<div class="t" style="left:838.0px;top:1014.1px;font-size:20px;color:#dce6f4;;transform:scaleY(1.06);transform-origin:0 84.65%"><div style="width:60px;text-align:center">3</div></div>
<div class="a" style="left:905px;top:972px;width:60px;height:104px;border:1.5px solid #6e7070;border-radius:10px"></div>
<div class="a" style="left:914px;top:984px;width:42px;height:3px;background:#80b020;"></div>
<div class="t" style="left:905.0px;top:1014.1px;font-size:20px;color:#dce6f4;;transform:scaleY(1.06);transform-origin:0 84.65%"><div style="width:60px;text-align:center">4</div></div>
<div class="a" style="left:972px;top:972px;width:60px;height:104px;border:1.5px solid #6e7070;border-radius:10px"></div>
<div class="a" style="left:981px;top:984px;width:42px;height:3px;background:#3a48e0;"></div>
<div class="t" style="left:972px;top:1002.1px;width:60px;text-align:center;font-size:20px;line-height:24px;color:#dce6f4">D15<br>-D0</div>
<div class="a" style="left:1039px;top:972px;width:60px;height:104px;border:1.5px solid #6e7070;border-radius:10px"></div>
<div class="t" style="left:1039px;top:988.1px;width:60px;text-align:center;font-size:20px;line-height:24px;color:#dce6f4">Math<br>Ref<br>Bus</div>
<div class="a" style="left:1106px;top:972px;width:60px;height:104px;border:1.5px solid #6e7070;border-radius:10px"></div>
<div class="a" style="left:1115px;top:984px;width:42px;height:3px;background:#707272;"></div>
<div class="t" style="left:1106.0px;top:1014.1px;font-size:20px;color:#dce6f4;;transform:scaleY(1.06);transform-origin:0 84.65%"><div style="width:60px;text-align:center">DVM</div></div>
<div class="a" style="left:1173px;top:972px;width:60px;height:104px;border:1.5px solid #6e7070;border-radius:10px"></div>
<div class="a" style="left:1182px;top:984px;width:42px;height:3px;background:#707272;"></div>
<div class="t" style="left:1173.0px;top:1014.1px;font-size:20px;color:#dce6f4;;transform:scaleY(1.06);transform-origin:0 84.65%"><div style="width:60px;text-align:center">AFG</div></div>
<div class="a" style="left:1245px;top:972px;width:144px;height:104px;background:#9eafd0;border:1px solid #6a7080;border-radius:8px;overflow:hidden"><div style="height:26px;background:#3f4f68"></div></div>
<div class="t" style="left:1253.0px;top:976.1px;font-size:20px;color:#dce6f4;;transform:scaleY(1.06);transform-origin:0 84.65%">Horizontal</div>
<div class="t k" style="left:1257.0px;top:1001.1px;font-size:20px;color:#000;word-spacing:2px;transform:scaleY(1.06);transform-origin:0 84.65%">20.0 ms/div</div>
<div class="t k" style="left:1257.0px;top:1025.1px;font-size:20px;color:#000;word-spacing:-2px;transform:scaleY(1.06);transform-origin:0 84.65%">SR: 50.0 kS/s</div>
<div class="t k" style="left:1256.0px;top:1049.1px;font-size:20px;color:#000;word-spacing:-2px;transform:scaleY(1.06);transform-origin:0 84.65%">RL: 10 kpts</div>
<div class="a" style="left:1401px;top:972px;width:144px;height:104px;background:#9eafd0;border:1px solid #6a7080;border-radius:8px;overflow:hidden"><div style="height:26px;background:#3f4f68"></div></div>
<div class="t" style="left:1409.0px;top:976.1px;font-size:20px;color:#dce6f4;;transform:scaleY(1.06);transform-origin:0 84.65%">Trigger</div>
<div class="a" style="left:1500px;top:977px;width:35px;height:19px;background:#b1aa35;border:1px solid #2a2a20;border-radius:3px;font-size:18px;line-height:17px;text-align:center;color:#000;-webkit-text-stroke:0.3px #000">1</div>
<svg class="a" style="left:1410px;top:1000px" width="30" height="24"><path d="M3 20 H6 L17 6 H23" fill="none" stroke="#000" stroke-width="2"/></svg>
<div class="t k" style="left:1473.0px;top:1001.1px;font-size:20px;color:#000;word-spacing:3px;transform:scaleY(1.06);transform-origin:0 84.65%">0.00 V</div>
<div class="a" style="left:1557px;top:972px;width:144px;height:104px;background:#9eafd0;border:1px solid #6a7080;border-radius:8px;overflow:hidden"><div style="height:26px;background:#3f4f68"></div></div>
<div class="t" style="left:1565.0px;top:976.1px;font-size:20px;color:#dce6f4;;transform:scaleY(1.06);transform-origin:0 84.65%">Acquisition</div>
<div class="t k" style="left:1569.0px;top:1001.1px;font-size:20px;color:#000;;transform:scaleY(1.06);transform-origin:0 84.65%">Sample</div>
<div class="t k" style="left:1568.0px;top:1025.1px;font-size:20px;color:#000;word-spacing:2px;transform:scaleY(1.06);transform-origin:0 84.65%">1.465 kAcqs</div>
<div class="a" style="left:1713px;top:972px;width:60px;height:104px;border:1.5px solid #6e7070;border-radius:10px"></div>
<div class="a" style="left:1722px;top:984px;width:42px;height:3px;background:#e07a30;"></div>
<div class="t" style="left:1713.0px;top:1014.1px;font-size:20px;color:#dce6f4;;transform:scaleY(1.06);transform-origin:0 84.65%"><div style="width:60px;text-align:center">RF</div></div>
<div class="a" style="left:1785px;top:972px;width:130px;height:48px;background:#3aa812;border:1px solid #6a7a6a;border-radius:8px"></div>
<div class="t" style="left:1785.0px;top:986.2px;font-size:21px;color:#dff0d0;;transform:scaleY(1.06);transform-origin:0 84.65%"><div style="width:130px;text-align:center">Triggered</div></div>
<div class="a" style="left:1785px;top:1028px;width:130px;height:48px;background:#9eafd0;border:1px solid #6a7080;border-radius:8px"></div>
<div class="t k" style="left:1785.0px;top:1029.1px;font-size:20px;color:#000;;transform:scaleY(1.06);transform-origin:0 84.65%"><div style="width:130px;text-align:center;word-spacing:1px">9 May 2019</div></div>
<div class="t k" style="left:1785.0px;top:1052.1px;font-size:20px;color:#000;;transform:scaleY(1.06);transform-origin:0 84.65%"><div style="width:130px;text-align:center">06:58:36</div></div>
</body></html>
